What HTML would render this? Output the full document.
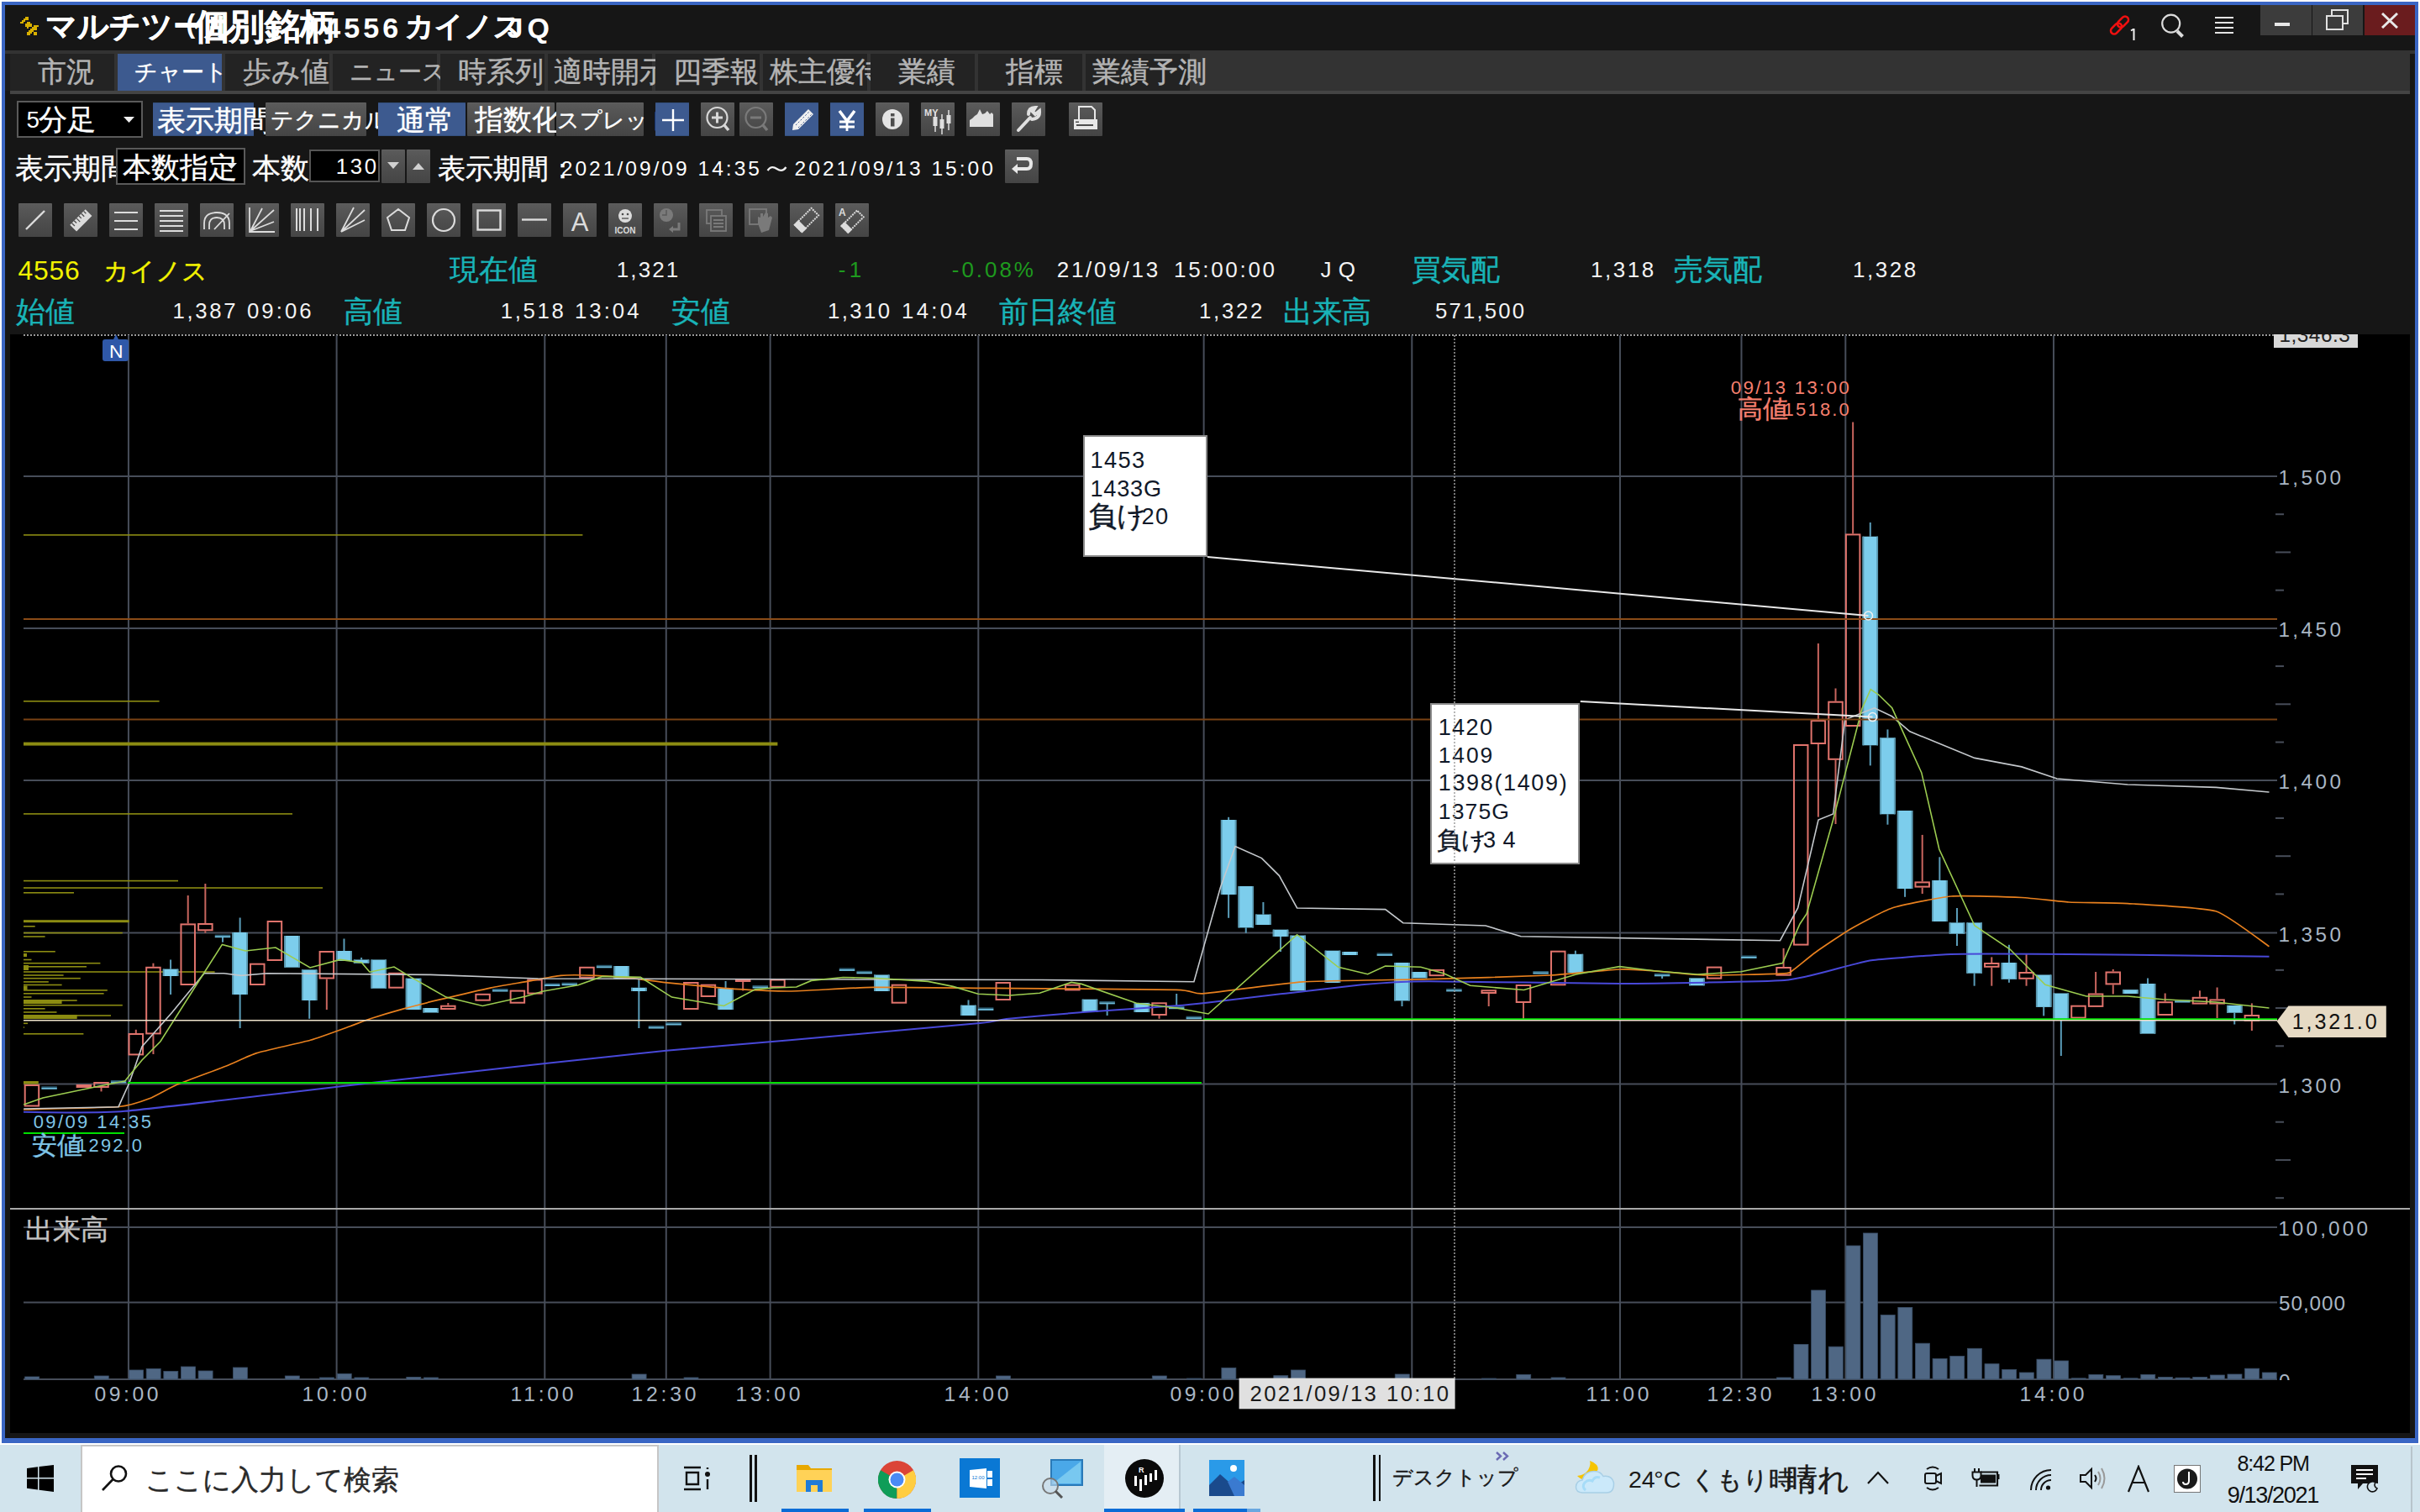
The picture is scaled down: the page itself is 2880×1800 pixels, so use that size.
<!DOCTYPE html>
<html><head><meta charset="utf-8"><style>
html,body{margin:0;padding:0;width:2880px;height:1800px;overflow:hidden;background:#fff}
body{position:relative;font-family:"Liberation Sans",sans-serif}
.t,.j,.r,.s{position:absolute}
.t,.j{white-space:nowrap}
.j{text-align:justify;text-align-last:justify;-webkit-text-stroke:0.4px currentColor}
</style></head><body>
<div class="r" style="left:0px;top:0px;width:2880px;height:1800px;background:#ffffff"></div>
<div class="r" style="left:2px;top:2px;width:2876px;height:1716px;background:#3a66c4"></div>
<div class="r" style="left:6px;top:6px;width:2868px;height:1706px;background:#161616"></div>
<svg class="s" style="left:24px;top:20px;" width="24" height="24" viewBox="0 0 24 24"><rect x="6" y="0" width="4" height="2" fill="#d8b000"/><rect x="4" y="2" width="6" height="2" fill="#d8b000"/><rect x="2" y="4" width="4" height="2" fill="#d8b000"/><rect x="0" y="6" width="4" height="2" fill="#d8b000"/><rect x="8" y="6" width="4" height="2" fill="#d8b000"/><rect x="6" y="8" width="8" height="4" fill="#d8b000"/><rect x="16" y="10" width="6" height="2" fill="#d8b000"/><rect x="8" y="12" width="2" height="2" fill="#d8b000"/><rect x="14" y="12" width="6" height="2" fill="#d8b000"/><rect x="12" y="14" width="8" height="2" fill="#d8b000"/><rect x="10" y="16" width="6" height="2" fill="#d8b000"/><rect x="8" y="18" width="6" height="2" fill="#d8b000"/><rect x="16" y="18" width="4" height="4" fill="#d8b000"/><rect x="8" y="20" width="4" height="2" fill="#d8b000"/></svg>
<div class="j" style="left:54.27px;top:12.73px;width:171.16px;font-size:37.31px;line-height:37.31px;color:#fff;font-weight:bold">マルチツール</div>
<div class="t" style="left:221.41px;top:12.2px;font-size:32px;line-height:32px;color:#fff;font-weight:bold">(</div>
<div class="j" style="left:230.84px;top:10.58px;width:137.82px;font-size:41.6px;line-height:41.6px;color:#fff;font-weight:bold">個別銘柄</div>
<div class="t" style="left:364.97px;top:12.2px;font-size:32px;line-height:32px;color:#fff;font-weight:bold">)</div>
<div class="t" style="left:386.29px;top:15.7px;font-size:34px;line-height:34px;color:#fff;letter-spacing:4.1px;font-weight:bold">4556</div>
<div class="j" style="left:481.57px;top:14.25px;width:104.86px;font-size:34.3px;line-height:34.3px;color:#fff;font-weight:bold">カイノス</div>
<div class="t" style="left:603.49px;top:15.7px;font-size:34px;line-height:34px;color:#fff;font-weight:bold">J</div>
<div class="t" style="left:627.61px;top:15.7px;font-size:34px;line-height:34px;color:#fff;font-weight:bold">Q</div>
<svg class="s" style="left:2510px;top:17px;" width="26" height="26" viewBox="0 0 26 26"><g fill="none" stroke="#f01010" stroke-width="2.6"><rect x="12.5" y="1.5" width="8" height="15" rx="4" transform="rotate(45 16.5 9)"/><rect x="4.5" y="9.5" width="8" height="15" rx="4" transform="rotate(45 8.5 17)"/></g></svg>
<svg class="s" style="left:2535px;top:34px;" width="7" height="14" viewBox="0 0 7 14"><path d="M1 2.5 L4.5 0.5 V14" fill="none" stroke="#f0f0f0" stroke-width="2"/></svg>
<svg class="s" style="left:2572px;top:16px;" width="28" height="29" viewBox="0 0 28 29"><g fill="none" stroke="#dcdcdc"><circle cx="11.7" cy="12.1" r="10.5" stroke-width="2.2"/><path d="M19 21 L25.5 27.5" stroke-width="4"/></g></svg>
<div class="r" style="left:2636px;top:20px;width:22px;height:2px;background:#e4e4e4"></div>
<div class="r" style="left:2636px;top:26px;width:22px;height:2px;background:#e4e4e4"></div>
<div class="r" style="left:2636px;top:32px;width:22px;height:2px;background:#e4e4e4"></div>
<div class="r" style="left:2636px;top:38px;width:22px;height:2px;background:#e4e4e4"></div>
<div class="r" style="left:2690px;top:6px;width:60.5px;height:35.5px;background:#3c3c3c"></div>
<div class="r" style="left:2707px;top:26.5px;width:18px;height:4px;background:#e8e8e8"></div>
<div class="r" style="left:2752px;top:6px;width:60px;height:35.5px;background:#3c3c3c"></div>
<svg class="s" style="left:2768px;top:11px;" width="28" height="26" viewBox="0 0 28 26"><g fill="none" stroke="#e0e0e0" stroke-width="2"><rect x="7" y="1" width="19" height="16"/><rect x="1" y="8" width="19" height="16" fill="#3c3c3c"/></g></svg>
<div class="r" style="left:2814px;top:6px;width:60px;height:35.5px;background:#6a1c1e"></div>
<svg class="s" style="left:2834px;top:15px;" width="20" height="19" viewBox="0 0 20 19"><g stroke="#e8e8e8" stroke-width="3"><path d="M1 1 L19 18 M19 1 L1 18"/></g></svg>
<div class="r" style="left:6px;top:60px;width:2868px;height:4px;background:#333333"></div>
<div class="r" style="left:6px;top:64px;width:6px;height:44px;background:#1c1c1c"></div>
<div class="r" style="left:12px;top:64px;width:2856px;height:44px;background:#333333"></div>
<div class="r" style="left:12px;top:108px;width:2856px;height:4px;background:#444444"></div>
<div class="r" style="left:12px;top:64px;width:124px;height:44px;background:#232323"></div>
<div class="j" style="left:44.62px;top:69px;width:58.76px;font-size:33.8px;line-height:33.8px;color:#b4b4b4">市況</div>
<div class="r" style="left:140px;top:64px;width:124px;height:44px;background:#3d5a8f"></div>
<div class="j" style="left:160.27px;top:72.27px;width:83.46px;font-size:27.3px;line-height:27.3px;color:#ffffff">チャート</div>
<div class="r" style="left:268px;top:64px;width:124px;height:44px;background:#232323"></div>
<div class="j" style="left:289.12px;top:69px;width:81.76px;font-size:33.8px;line-height:33.8px;color:#b4b4b4">歩み値</div>
<div class="r" style="left:396px;top:64px;width:124px;height:44px;background:#232323"></div>
<div class="j" style="left:415.74px;top:72.09px;width:84.53px;font-size:27.65px;line-height:27.65px;color:#b4b4b4">ニュース</div>
<div class="r" style="left:524px;top:64px;width:124px;height:44px;background:#232323"></div>
<div class="j" style="left:545.12px;top:69px;width:81.76px;font-size:33.8px;line-height:33.8px;color:#b4b4b4">時系列</div>
<div class="r" style="left:652px;top:64px;width:124px;height:44px;background:#232323"></div>
<div class="j" style="left:658.62px;top:69px;width:110.76px;font-size:33.8px;line-height:33.8px;color:#b4b4b4">適時開示</div>
<div class="r" style="left:780px;top:64px;width:124px;height:44px;background:#232323"></div>
<div class="j" style="left:800.62px;top:69px;width:82.76px;font-size:33.8px;line-height:33.8px;color:#b4b4b4">四季報</div>
<div class="r" style="left:908px;top:64px;width:124px;height:44px;background:#232323"></div>
<div class="j" style="left:915.62px;top:69px;width:108.76px;font-size:33.8px;line-height:33.8px;color:#b4b4b4">株主優待</div>
<div class="r" style="left:1036px;top:64px;width:124px;height:44px;background:#232323"></div>
<div class="j" style="left:1069.12px;top:69px;width:57.76px;font-size:33.8px;line-height:33.8px;color:#b4b4b4">業績</div>
<div class="r" style="left:1164px;top:64px;width:124px;height:44px;background:#232323"></div>
<div class="j" style="left:1197.12px;top:69px;width:57.76px;font-size:33.8px;line-height:33.8px;color:#b4b4b4">指標</div>
<div class="r" style="left:1292px;top:64px;width:124px;height:44px;background:#232323"></div>
<div class="j" style="left:1300.12px;top:69px;width:107.76px;font-size:33.8px;line-height:33.8px;color:#b4b4b4">業績予測</div>
<div class="r" style="left:20px;top:120px;width:150px;height:44px;background:#5a5a5a"></div>
<div class="r" style="left:22px;top:122px;width:146px;height:40px;background:#000000"></div>
<div class="t" style="left:31.58px;top:129.32px;font-size:27.86px;line-height:27.86px;color:#fff">5</div>
<div class="j" style="left:45.62px;top:126px;width:56.96px;font-size:33.8px;line-height:33.8px;color:#fff">分足</div>
<svg class="s" style="left:147px;top:139px;" width="13" height="7" viewBox="0 0 13 7"><path d="M0 0 L13 0 L6.5 7 Z" fill="#f0f0f0"/></svg>
<div class="r" style="left:182px;top:122px;width:120px;height:40px;background:#3d5a8f;border-radius:1px;box-shadow:inset 0 1px 0 #34507e, inset 0 -1px 0 #34507e"></div>
<div class="j" style="left:187.02px;top:127px;width:107.86px;font-size:33.8px;line-height:33.8px;color:#fff">表示期間</div>
<div class="r" style="left:316px;top:122px;width:120px;height:40px;background:#4d4d4d;background:linear-gradient(#646464 0, #5a5a5a 1.5px, #4f4f4f 50%, #454545 100%);border-radius:1px"></div>
<div class="j" style="left:322.27px;top:129.25px;width:104.47px;font-size:27.33px;line-height:27.33px;color:#fff">テクニカル</div>
<div class="r" style="left:450px;top:122px;width:104px;height:40px;background:#3d5a8f;border-radius:1px;box-shadow:inset 0 1px 0 #34507e, inset 0 -1px 0 #34507e"></div>
<div class="j" style="left:472.32px;top:127px;width:58.36px;font-size:33.8px;line-height:33.8px;color:#fff">通常</div>
<div class="r" style="left:556px;top:122px;width:104px;height:40px;background:#4d4d4d;background:linear-gradient(#646464 0, #5a5a5a 1.5px, #4f4f4f 50%, #454545 100%);border-radius:1px"></div>
<div class="j" style="left:564.62px;top:126px;width:85.06px;font-size:33.8px;line-height:33.8px;color:#fff">指数化</div>
<div class="r" style="left:662px;top:122px;width:104px;height:40px;background:#4d4d4d;background:linear-gradient(#646464 0, #5a5a5a 1.5px, #4f4f4f 50%, #454545 100%);border-radius:1px"></div>
<div class="j" style="left:663.4px;top:129.91px;width:99.51px;font-size:26.03px;line-height:26.03px;color:#fff">スプレッド</div>
<div class="r" style="left:780px;top:122px;width:40px;height:40px;background:#3d5a8f;border-radius:1px;box-shadow:inset 0 1px 0 #34507e, inset 0 -1px 0 #34507e"></div><svg class="s" style="left:780px;top:122px;" width="40" height="40" viewBox="0 0 40 40"><path d="M8 21 H34 M21 8 V34" stroke="#fff" stroke-width="2.4"/></svg>
<div class="r" style="left:834px;top:122px;width:40px;height:40px;background:#4d4d4d;background:linear-gradient(#646464 0, #5a5a5a 1.5px, #4f4f4f 50%, #454545 100%);border-radius:1px"></div><svg class="s" style="left:834px;top:122px;" width="40" height="40" viewBox="0 0 40 40"><g fill="none" stroke="#d8d8d8" stroke-width="2.2"><circle cx="19.5" cy="18" r="12"/><path d="M28 27 L33 33" stroke-width="3.5"/><path d="M13 18 H26 M19.5 11.5 V24.5" stroke-width="3"/></g></svg>
<div class="r" style="left:880px;top:122px;width:40px;height:40px;background:#4d4d4d;background:linear-gradient(#646464 0, #5a5a5a 1.5px, #4f4f4f 50%, #454545 100%);border-radius:1px"></div><svg class="s" style="left:880px;top:122px;" width="40" height="40" viewBox="0 0 40 40"><g fill="none" stroke="#7a7a7a" stroke-width="2.2"><circle cx="19.5" cy="18" r="12"/><path d="M28 27 L33 33" stroke-width="3.5"/><path d="M13 18 H26" stroke-width="3"/></g></svg>
<div class="r" style="left:934px;top:122px;width:40px;height:40px;background:#3d5a8f;border-radius:1px;box-shadow:inset 0 1px 0 #34507e, inset 0 -1px 0 #34507e"></div><svg class="s" style="left:934px;top:122px;" width="40" height="40" viewBox="0 0 40 40"><g fill="#f0f0f0"><path d="M9 33 L10 26 L28 8 L34 14 L16 32 Z"/></g><path d="M13 27 L29 11 M16 30 L32 14" stroke="#3d5a8f" stroke-width="1" stroke-dasharray="2 2"/></svg>
<div class="r" style="left:988px;top:122px;width:40px;height:40px;background:#3d5a8f;border-radius:1px;box-shadow:inset 0 1px 0 #34507e, inset 0 -1px 0 #34507e"></div><svg class="s" style="left:988px;top:122px;" width="40" height="40" viewBox="0 0 40 40"><g stroke="#fff" stroke-width="3.6" fill="none"><path d="M11 10 L20 22 L29 10"/><path d="M20 21 V34 M11 23 H29 M11 29 H29" stroke-width="2.8"/></g></svg>
<div class="r" style="left:1042px;top:122px;width:40px;height:40px;background:#4d4d4d;background:linear-gradient(#646464 0, #5a5a5a 1.5px, #4f4f4f 50%, #454545 100%);border-radius:1px"></div><svg class="s" style="left:1042px;top:122px;" width="40" height="40" viewBox="0 0 40 40"><circle cx="20" cy="20" r="12" fill="#e4e4e4"/><rect x="18" y="13" width="4.5" height="3.5" fill="#4d4d4d"/><rect x="18" y="18.5" width="4.5" height="10" fill="#4d4d4d"/></svg>
<div class="r" style="left:1096px;top:122px;width:40px;height:40px;background:#4d4d4d;background:linear-gradient(#646464 0, #5a5a5a 1.5px, #4f4f4f 50%, #454545 100%);border-radius:1px"></div><svg class="s" style="left:1096px;top:122px;" width="40" height="40" viewBox="0 0 40 40"><text x="4" y="16" font-family="Liberation Sans" font-weight="bold" font-size="11" fill="#e0e0e0">MY</text><g stroke="#e0e0e0" stroke-width="1.5"><path d="M17 11 V35 M25 14 V38 M33 9 V33"/></g><g fill="#e0e0e0"><rect x="14.5" y="17" width="5" height="11"/><rect x="22.5" y="20" width="5" height="11"/><rect x="30.5" y="15" width="5" height="10"/></g></svg>
<div class="r" style="left:1150px;top:122px;width:40px;height:40px;background:#4d4d4d;background:linear-gradient(#646464 0, #5a5a5a 1.5px, #4f4f4f 50%, #454545 100%);border-radius:1px"></div><svg class="s" style="left:1150px;top:122px;" width="40" height="40" viewBox="0 0 40 40"><path d="M4 29 V21 L7 19 L10 16 L13 14 L16 8 L19 14 L22 13 L25 10 L28 14 L30 12 L32 14 V29 Z" fill="#e0e0e0"/></svg>
<div class="r" style="left:1204px;top:122px;width:40px;height:40px;background:#4d4d4d;background:linear-gradient(#646464 0, #5a5a5a 1.5px, #4f4f4f 50%, #454545 100%);border-radius:1px"></div><svg class="s" style="left:1204px;top:122px;" width="40" height="40" viewBox="0 0 40 40"><g fill="none" stroke="#e0e0e0" stroke-width="4" stroke-linecap="round"><path d="M8 33 L22 18"/><path d="M20 14 Q20 6 28 6 L25 11 L28 14 L33 10 Q34 19 24 20"/></g></svg>
<div class="r" style="left:1272px;top:122px;width:40px;height:40px;background:#4d4d4d;background:linear-gradient(#646464 0, #5a5a5a 1.5px, #4f4f4f 50%, #454545 100%);border-radius:1px"></div><svg class="s" style="left:1272px;top:122px;" width="40" height="40" viewBox="0 0 40 40"><g fill="none" stroke="#e8e8e8" stroke-width="2"><path d="M12 21 V5 H27 L31 9 V21"/></g><rect x="6" y="20" width="28" height="12" fill="#e8e8e8"/><rect x="9" y="26" width="20" height="2" fill="#4d4d4d"/><rect x="8" y="22.5" width="4" height="1.5" fill="#4d4d4d"/></svg>
<div class="j" style="left:18.42px;top:183.5px;width:109.96px;font-size:33.8px;line-height:33.8px;color:#fff">表示期間</div>
<div class="r" style="left:138px;top:176px;width:154px;height:44px;background:#5a5a5a"></div>
<div class="r" style="left:140px;top:178px;width:150px;height:40px;background:#000000"></div>
<div class="j" style="left:146.32px;top:182.5px;width:110.96px;font-size:33.8px;line-height:33.8px;color:#fff">本数指定</div>
<svg class="s" style="left:268.7px;top:194px;" width="13" height="7" viewBox="0 0 13 7"><path d="M0 0 L13 0 L6.5 7 Z" fill="#f0f0f0"/></svg>
<div class="j" style="left:300.12px;top:183.5px;width:59.26px;font-size:33.8px;line-height:33.8px;color:#fff">本数</div>
<div class="r" style="left:368px;top:178px;width:84px;height:39px;background:#555555"></div>
<div class="r" style="left:370px;top:180px;width:80px;height:35px;background:#000000"></div>
<div class="t" style="left:399.64px;top:186.14px;font-size:25.71px;line-height:25.71px;color:#fff;letter-spacing:2.83px">130</div>
<div class="r" style="left:454px;top:178px;width:28px;height:40px;background:#4d4d4d;background:linear-gradient(#646464 0, #5a5a5a 1.5px, #4f4f4f 50%, #454545 100%);border-radius:1px"></div><svg class="s" style="left:454px;top:178px;" width="28" height="40" viewBox="0 0 28 40"><path d="M7 15 L21 15 L14 23 Z" fill="#d0d0d0"/></svg>
<div class="r" style="left:484px;top:178px;width:28px;height:40px;background:#4d4d4d;background:linear-gradient(#646464 0, #5a5a5a 1.5px, #4f4f4f 50%, #454545 100%);border-radius:1px"></div><svg class="s" style="left:484px;top:178px;" width="28" height="40" viewBox="0 0 28 40"><path d="M7 24 L21 24 L14 16 Z" fill="#d0d0d0"/></svg>
<div class="j" style="left:520.99px;top:183.84px;width:126.63px;font-size:33.13px;line-height:33.13px;color:#fff">表示期間：</div>
<div class="t" style="left:667.76px;top:188.81px;font-size:24.57px;line-height:24.57px;color:#fff;letter-spacing:3px">2021/09/09 14:35</div>
<svg class="s" style="left:912px;top:195px;" width="25" height="12" viewBox="0 0 25 12"><path d="M1.5 8 Q6 1.5 12.5 6 Q19 10.5 23.5 4" fill="none" stroke="#f0f0f0" stroke-width="2.2"/></svg>
<div class="t" style="left:945.56px;top:188.81px;font-size:24.57px;line-height:24.57px;color:#fff;letter-spacing:3.01px">2021/09/13 15:00</div>
<div class="r" style="left:1196px;top:178px;width:40px;height:40px;background:#4d4d4d;background:linear-gradient(#646464 0, #5a5a5a 1.5px, #4f4f4f 50%, #454545 100%);border-radius:1px"></div><svg class="s" style="left:1196px;top:178px;" width="40" height="40" viewBox="0 0 40 40"><g fill="none" stroke="#e8e8e8" stroke-width="4"><path d="M14 11 H26 Q31 11 31 17 Q31 23 26 23 H11"/></g><path d="M15 17 L8 23 L15 29 Z" fill="#e8e8e8"/></svg>
<div class="r" style="left:22px;top:242px;width:40px;height:40px;background:#4d4d4d;background:linear-gradient(#646464 0, #5a5a5a 1.5px, #4f4f4f 50%, #454545 100%);border-radius:1px"></div><svg class="s" style="left:22px;top:242px;" width="40" height="40" viewBox="0 0 40 40"><path d="M9 31 L31 9" stroke="#dcdcdc" stroke-width="2.4"/></svg>
<div class="r" style="left:76px;top:242px;width:40px;height:40px;background:#4d4d4d;background:linear-gradient(#646464 0, #5a5a5a 1.5px, #4f4f4f 50%, #454545 100%);border-radius:1px"></div><svg class="s" style="left:76px;top:242px;" width="40" height="40" viewBox="0 0 40 40"><g transform="rotate(-45 20 20)"><rect x="7" y="15" width="26" height="11" fill="#dcdcdc"/><path d="M10 15 V20 M14 15 V19 M18 15 V21 M22 15 V19 M26 15 V20 M30 15 V19" stroke="#4d4d4d" stroke-width="1.3"/></g></svg>
<div class="r" style="left:130px;top:242px;width:40px;height:40px;background:#4d4d4d;background:linear-gradient(#646464 0, #5a5a5a 1.5px, #4f4f4f 50%, #454545 100%);border-radius:1px"></div><svg class="s" style="left:130px;top:242px;" width="40" height="40" viewBox="0 0 40 40"><path d="M6 11 H34 M6 21 H34 M6 31 H34" stroke="#dcdcdc" stroke-width="2"/></svg>
<div class="r" style="left:184px;top:242px;width:40px;height:40px;background:#4d4d4d;background:linear-gradient(#646464 0, #5a5a5a 1.5px, #4f4f4f 50%, #454545 100%);border-radius:1px"></div><svg class="s" style="left:184px;top:242px;" width="40" height="40" viewBox="0 0 40 40"><path d="M6 9 H34 M6 15 H34 M6 21 H34 M6 27 H34 M6 33 H34" stroke="#dcdcdc" stroke-width="2"/></svg>
<div class="r" style="left:238px;top:242px;width:40px;height:40px;background:#4d4d4d;background:linear-gradient(#646464 0, #5a5a5a 1.5px, #4f4f4f 50%, #454545 100%);border-radius:1px"></div><svg class="s" style="left:238px;top:242px;" width="40" height="40" viewBox="0 0 40 40"><g fill="none" stroke="#dcdcdc" stroke-width="1.8"><path d="M5 31 V24 Q5 11 20 11 Q35 11 35 24 V31"/><path d="M11 31 V26 Q11 17 20 17 Q29 17 29 26 V31"/><path d="M17 31 L35 12"/></g></svg>
<div class="r" style="left:292px;top:242px;width:40px;height:40px;background:#4d4d4d;background:linear-gradient(#646464 0, #5a5a5a 1.5px, #4f4f4f 50%, #454545 100%);border-radius:1px"></div><svg class="s" style="left:292px;top:242px;" width="40" height="40" viewBox="0 0 40 40"><g fill="none" stroke="#dcdcdc" stroke-width="1.8"><path d="M5 5 V34 H35"/><path d="M6 33 L20 6 M6 33 L34 8 M6 33 L34 22"/></g></svg>
<div class="r" style="left:346px;top:242px;width:40px;height:40px;background:#4d4d4d;background:linear-gradient(#646464 0, #5a5a5a 1.5px, #4f4f4f 50%, #454545 100%);border-radius:1px"></div><svg class="s" style="left:346px;top:242px;" width="40" height="40" viewBox="0 0 40 40"><path d="M7 6 V33 M11 6 V33 M16 6 V33 M24 6 V33 M32 6 V33" stroke="#dcdcdc" stroke-width="2"/></svg>
<div class="r" style="left:400px;top:242px;width:40px;height:40px;background:#4d4d4d;background:linear-gradient(#646464 0, #5a5a5a 1.5px, #4f4f4f 50%, #454545 100%);border-radius:1px"></div><svg class="s" style="left:400px;top:242px;" width="40" height="40" viewBox="0 0 40 40"><g fill="none" stroke="#dcdcdc" stroke-width="1.8"><path d="M6 34 L21 5 M6 34 L34 8 M6 34 L34 20"/></g></svg>
<div class="r" style="left:454px;top:242px;width:40px;height:40px;background:#4d4d4d;background:linear-gradient(#646464 0, #5a5a5a 1.5px, #4f4f4f 50%, #454545 100%);border-radius:1px"></div><svg class="s" style="left:454px;top:242px;" width="40" height="40" viewBox="0 0 40 40"><path d="M20 7 L33 17 L28 32 H12 L7 17 Z" fill="none" stroke="#dcdcdc" stroke-width="2"/></svg>
<div class="r" style="left:508px;top:242px;width:40px;height:40px;background:#4d4d4d;background:linear-gradient(#646464 0, #5a5a5a 1.5px, #4f4f4f 50%, #454545 100%);border-radius:1px"></div><svg class="s" style="left:508px;top:242px;" width="40" height="40" viewBox="0 0 40 40"><circle cx="20" cy="20" r="13" fill="none" stroke="#dcdcdc" stroke-width="2.2"/></svg>
<div class="r" style="left:562px;top:242px;width:40px;height:40px;background:#4d4d4d;background:linear-gradient(#646464 0, #5a5a5a 1.5px, #4f4f4f 50%, #454545 100%);border-radius:1px"></div><svg class="s" style="left:562px;top:242px;" width="40" height="40" viewBox="0 0 40 40"><rect x="6.5" y="8.5" width="27" height="23" fill="none" stroke="#dcdcdc" stroke-width="2.4"/></svg>
<div class="r" style="left:616px;top:242px;width:40px;height:40px;background:#4d4d4d;background:linear-gradient(#646464 0, #5a5a5a 1.5px, #4f4f4f 50%, #454545 100%);border-radius:1px"></div><svg class="s" style="left:616px;top:242px;" width="40" height="40" viewBox="0 0 40 40"><path d="M5 19.5 H35" stroke="#dcdcdc" stroke-width="2.4"/></svg>
<div class="r" style="left:670px;top:242px;width:40px;height:40px;background:#4d4d4d;background:linear-gradient(#646464 0, #5a5a5a 1.5px, #4f4f4f 50%, #454545 100%);border-radius:1px"></div><svg class="s" style="left:670px;top:242px;" width="40" height="40" viewBox="0 0 40 40"><text x="20" y="33" text-anchor="middle" font-family="Liberation Sans" font-size="31" fill="#dcdcdc">A</text></svg>
<div class="r" style="left:724px;top:242px;width:40px;height:40px;background:#4d4d4d;background:linear-gradient(#646464 0, #5a5a5a 1.5px, #4f4f4f 50%, #454545 100%);border-radius:1px"></div><svg class="s" style="left:724px;top:242px;" width="40" height="40" viewBox="0 0 40 40"><circle cx="20" cy="15" r="8" fill="#dcdcdc"/><circle cx="17" cy="13" r="1.3" fill="#4d4d4d"/><circle cx="23" cy="13" r="1.3" fill="#4d4d4d"/><path d="M16 18 H24" stroke="#4d4d4d" stroke-width="1.3"/><text x="20" y="36" text-anchor="middle" font-family="Liberation Sans" font-weight="bold" font-size="10" fill="#dcdcdc">ICON</text></svg>
<div class="r" style="left:778px;top:242px;width:40px;height:40px;background:#4d4d4d;background:linear-gradient(#646464 0, #5a5a5a 1.5px, #4f4f4f 50%, #454545 100%);border-radius:1px"></div><svg class="s" style="left:778px;top:242px;" width="40" height="40" viewBox="0 0 40 40"><circle cx="15" cy="14" r="8" fill="#7a7a7a"/><path d="M15 8 V14 H10" fill="none" stroke="#5a5a5a" stroke-width="1.5"/><path d="M30 23 V31 H21" fill="none" stroke="#7a7a7a" stroke-width="3"/><path d="M23 27 L18 31 L23 35 Z" fill="#7a7a7a"/></svg>
<div class="r" style="left:832px;top:242px;width:40px;height:40px;background:#4d4d4d;background:linear-gradient(#646464 0, #5a5a5a 1.5px, #4f4f4f 50%, #454545 100%);border-radius:1px"></div><svg class="s" style="left:832px;top:242px;" width="40" height="40" viewBox="0 0 40 40"><g fill="none" stroke="#7a7a7a" stroke-width="1.8"><rect x="9" y="8" width="18" height="16"/><rect x="14" y="15" width="18" height="18" fill="#4d4d4d"/><path d="M17 20 H29 M17 24 H29 M17 28 H29"/></g></svg>
<div class="r" style="left:886px;top:242px;width:40px;height:40px;background:#4d4d4d;background:linear-gradient(#646464 0, #5a5a5a 1.5px, #4f4f4f 50%, #454545 100%);border-radius:1px"></div><svg class="s" style="left:886px;top:242px;" width="40" height="40" viewBox="0 0 40 40"><rect x="6" y="7" width="20" height="18" fill="none" stroke="#7a7a7a" stroke-width="1.8"/><path d="M20 35 L16 24 V16 L19 17 V12 L22 12 V16 L25 11 L28 12 V17 L31 15 L33 17 L29 32 Z" fill="#7a7a7a"/></svg>
<div class="r" style="left:940px;top:242px;width:40px;height:40px;background:#4d4d4d;background:linear-gradient(#646464 0, #5a5a5a 1.5px, #4f4f4f 50%, #454545 100%);border-radius:1px"></div><svg class="s" style="left:940px;top:242px;" width="40" height="40" viewBox="0 0 40 40"><g transform="rotate(-45 20 20)"><rect x="6" y="14" width="28" height="12" fill="none" stroke="#dcdcdc" stroke-width="2" stroke-dasharray="2 1"/><rect x="5" y="13" width="8" height="14" fill="#dcdcdc"/></g></svg>
<div class="r" style="left:994px;top:242px;width:40px;height:40px;background:#4d4d4d;background:linear-gradient(#646464 0, #5a5a5a 1.5px, #4f4f4f 50%, #454545 100%);border-radius:1px"></div><svg class="s" style="left:994px;top:242px;" width="40" height="40" viewBox="0 0 40 40"><text x="4" y="15" font-family="Liberation Sans" font-weight="bold" font-size="12" fill="#dcdcdc">A</text><g transform="rotate(-45 21 22)"><rect x="8" y="16" width="26" height="11" fill="none" stroke="#dcdcdc" stroke-width="2" stroke-dasharray="2 1"/><rect x="7" y="15" width="7" height="13" fill="#dcdcdc"/></g></svg>
<div class="t" style="left:21.57px;top:306.72px;font-size:31.86px;line-height:31.86px;color:#f2f200;letter-spacing:0.79px">4556</div>
<div class="j" style="left:123.36px;top:307.22px;width:92.88px;font-size:30.38px;line-height:30.38px;color:#f2f200">カイノス</div>
<div class="j" style="left:534.69px;top:303.34px;width:84.72px;font-size:35.1px;line-height:35.1px;color:#19b4b8">現在値</div>
<div class="t" style="left:733.72px;top:307.6px;font-size:26px;line-height:26px;color:#f4f4f4;letter-spacing:2.12px">1,321</div>
<div class="t" style="left:997.84px;top:307.6px;font-size:26px;line-height:26px;color:#1e9a1e;letter-spacing:4.31px">-1</div>
<div class="t" style="left:1132.84px;top:307.6px;font-size:26px;line-height:26px;color:#1e9a1e;letter-spacing:2.94px">-0.08%</div>
<div class="t" style="left:1257.69px;top:307.6px;font-size:26px;line-height:26px;color:#f4f4f4;letter-spacing:2.75px">21/09/13</div>
<div class="t" style="left:1397.02px;top:307.6px;font-size:26px;line-height:26px;color:#f4f4f4;letter-spacing:2.68px">15:00:00</div>
<div class="t" style="left:1571.59px;top:307.6px;font-size:26px;line-height:26px;color:#f4f4f4">J</div>
<div class="t" style="left:1592.77px;top:307.6px;font-size:26px;line-height:26px;color:#f4f4f4">Q</div>
<div class="j" style="left:1680.49px;top:303.34px;width:85.02px;font-size:35.1px;line-height:35.1px;color:#19b4b8">買気配</div>
<div class="t" style="left:1893.02px;top:307.6px;font-size:26px;line-height:26px;color:#f4f4f4;letter-spacing:2.51px">1,318</div>
<div class="j" style="left:1992.49px;top:303.34px;width:85.02px;font-size:35.1px;line-height:35.1px;color:#19b4b8">売気配</div>
<div class="t" style="left:2205.02px;top:307.6px;font-size:26px;line-height:26px;color:#f4f4f4;letter-spacing:2.51px">1,328</div>
<div class="j" style="left:18.79px;top:352.84px;width:58.32px;font-size:35.1px;line-height:35.1px;color:#19b4b8">始値</div>
<div class="t" style="left:205.44px;top:358.14px;font-size:25.71px;line-height:25.71px;color:#f4f4f4;letter-spacing:2.7px">1,387</div>
<div class="t" style="left:294px;top:358.14px;font-size:25.71px;line-height:25.71px;color:#f4f4f4;letter-spacing:3.05px">09:06</div>
<div class="j" style="left:409.49px;top:352.84px;width:58.02px;font-size:35.1px;line-height:35.1px;color:#19b4b8">高値</div>
<div class="t" style="left:595.74px;top:358.14px;font-size:25.71px;line-height:25.71px;color:#f4f4f4;letter-spacing:2.66px">1,518</div>
<div class="t" style="left:684.04px;top:358.14px;font-size:25.71px;line-height:25.71px;color:#f4f4f4;letter-spacing:3.02px">13:04</div>
<div class="j" style="left:799.09px;top:352.84px;width:58.32px;font-size:35.1px;line-height:35.1px;color:#19b4b8">安値</div>
<div class="t" style="left:985.04px;top:358.14px;font-size:25.71px;line-height:25.71px;color:#f4f4f4;letter-spacing:2.4px">1,310</div>
<div class="t" style="left:1073.04px;top:358.14px;font-size:25.71px;line-height:25.71px;color:#f4f4f4;letter-spacing:3.34px">14:04</div>
<div class="j" style="left:1189.49px;top:352.84px;width:110.02px;font-size:35.1px;line-height:35.1px;color:#19b4b8">前日終値</div>
<div class="t" style="left:1427.04px;top:358.14px;font-size:25.71px;line-height:25.71px;color:#f4f4f4;letter-spacing:2.73px">1,322</div>
<div class="j" style="left:1527.49px;top:352.84px;width:83.02px;font-size:35.1px;line-height:35.1px;color:#19b4b8">出来高</div>
<div class="t" style="left:1707.97px;top:358.14px;font-size:25.71px;line-height:25.71px;color:#f4f4f4;letter-spacing:2.18px">571,500</div>
<div class="r" style="left:12px;top:398px;width:2856px;height:1308px;background:#000000"></div>
<svg class="s" style="left:0;top:0" width="2880" height="1800" viewBox="0 0 2880 1800"><path d="M28 399 H2706" stroke="#9a9a9a" stroke-width="2" stroke-dasharray="2 2"/><path d="M28 567 H2710" stroke="#474d59" stroke-width="2"/><path d="M28 748 H2710" stroke="#474d59" stroke-width="2"/><path d="M28 929 H2710" stroke="#474d59" stroke-width="2"/><path d="M28 1110.5 H2710" stroke="#474d59" stroke-width="2"/><path d="M28 1290.5 H2710" stroke="#474d59" stroke-width="2"/><path d="M28 1461 H2710" stroke="#474d59" stroke-width="2"/><path d="M28 1550.5 H2710" stroke="#474d59" stroke-width="2"/><path d="M28 1642 H2710" stroke="#474d59" stroke-width="2"/><path d="M152.94 399 V1642" stroke="#474d59" stroke-width="2"/><path d="M400.62 399 V1642" stroke="#474d59" stroke-width="2"/><path d="M648.3 399 V1642" stroke="#474d59" stroke-width="2"/><path d="M792.78 399 V1642" stroke="#474d59" stroke-width="2"/><path d="M916.62 399 V1642" stroke="#474d59" stroke-width="2"/><path d="M1164.3 399 V1642" stroke="#474d59" stroke-width="2"/><path d="M1432.62 399 V1642" stroke="#474d59" stroke-width="2"/><path d="M1680.3 399 V1642" stroke="#474d59" stroke-width="2"/><path d="M1927.98 399 V1642" stroke="#474d59" stroke-width="2"/><path d="M2072.46 399 V1642" stroke="#474d59" stroke-width="2"/><path d="M2196.3 399 V1642" stroke="#474d59" stroke-width="2"/><path d="M2443.98 399 V1642" stroke="#474d59" stroke-width="2"/><path d="M12 1439 H2868" stroke="#a8a8a8" stroke-width="2"/><path d="M2708 612.22 H2718" stroke="#474d59" stroke-width="2"/><path d="M2708 657.44 H2726" stroke="#474d59" stroke-width="2"/><path d="M2708 702.66 H2718" stroke="#474d59" stroke-width="2"/><path d="M2708 793.09 H2718" stroke="#474d59" stroke-width="2"/><path d="M2708 838.31 H2726" stroke="#474d59" stroke-width="2"/><path d="M2708 883.53 H2718" stroke="#474d59" stroke-width="2"/><path d="M2708 973.97 H2718" stroke="#474d59" stroke-width="2"/><path d="M2708 1019.19 H2726" stroke="#474d59" stroke-width="2"/><path d="M2708 1064.41 H2718" stroke="#474d59" stroke-width="2"/><path d="M2708 1154.84 H2718" stroke="#474d59" stroke-width="2"/><path d="M2708 1200.06 H2726" stroke="#474d59" stroke-width="2"/><path d="M2708 1245.28 H2718" stroke="#474d59" stroke-width="2"/><path d="M2708 1335.72 H2718" stroke="#474d59" stroke-width="2"/><path d="M2708 1380.94 H2726" stroke="#474d59" stroke-width="2"/><path d="M2708 1426.16 H2718" stroke="#474d59" stroke-width="2"/><rect x="28" y="636.1" width="665.4" height="1.6" fill="#8c8c12"/><rect x="28" y="834" width="161.6" height="1.6" fill="#8c8c12"/><rect x="28" y="883.6" width="897.4" height="4" fill="#8c8c12"/><rect x="28" y="968.1" width="320" height="1.6" fill="#8c8c12"/><rect x="28" y="1047.8" width="184" height="1.6" fill="#8c8c12"/><rect x="28" y="1056.2" width="356" height="1.6" fill="#8c8c12"/><rect x="28" y="1062" width="60" height="1.6" fill="#8c8c12"/><rect x="28" y="1095.2" width="125.6" height="3" fill="#8c8c12"/><rect x="28" y="1102" width="13.7" height="1.6" fill="#8c8c12"/><rect x="28" y="1109.8" width="117.8" height="1.6" fill="#8c8c12"/><rect x="28" y="1114.2" width="25.6" height="1.6" fill="#8c8c12"/><rect x="28" y="1132" width="37.8" height="1.6" fill="#8c8c12"/><rect x="28" y="1135" width="4" height="4" fill="#8c8c12"/><rect x="28" y="1141.7" width="9.5" height="1.6" fill="#8c8c12"/><rect x="28" y="1145.9" width="91.4" height="1.6" fill="#8c8c12"/><rect x="28" y="1150" width="75" height="1.6" fill="#8c8c12"/><rect x="28" y="1149" width="6" height="6" fill="#8c8c12"/><rect x="28" y="1156.2" width="227.6" height="1.6" fill="#8c8c12"/><rect x="28" y="1160.2" width="47.6" height="1.6" fill="#8c8c12"/><rect x="28" y="1163.9" width="67.8" height="1.6" fill="#8c8c12"/><rect x="28" y="1168.1" width="29.8" height="1.6" fill="#8c8c12"/><rect x="28" y="1171.7" width="45.6" height="1.6" fill="#8c8c12"/><rect x="28" y="1173.5" width="4.5" height="5" fill="#8c8c12"/><rect x="28" y="1178.1" width="99.8" height="1.6" fill="#8c8c12"/><rect x="28" y="1182" width="95.6" height="1.6" fill="#8c8c12"/><rect x="28" y="1186.2" width="9.5" height="1.6" fill="#8c8c12"/><rect x="28" y="1190" width="45.6" height="5" fill="#8c8c12"/><rect x="28" y="1190.2" width="63.7" height="1.6" fill="#8c8c12"/><rect x="28" y="1195.9" width="117.8" height="1.6" fill="#8c8c12"/><rect x="28" y="1200" width="25.6" height="1.6" fill="#8c8c12"/><rect x="28" y="1204.2" width="39.5" height="1.6" fill="#8c8c12"/><rect x="28" y="1208" width="63.7" height="5" fill="#8c8c12"/><rect x="28" y="1208.2" width="104" height="1.6" fill="#8c8c12"/><rect x="28" y="1217.5" width="5" height="1.6" fill="#8c8c12"/><rect x="28" y="1222.2" width="1" height="1.6" fill="#8c8c12"/><rect x="28" y="1230" width="71.4" height="1.6" fill="#8c8c12"/><rect x="28" y="1287.05" width="17.8" height="3.5" fill="#8c8c12"/><rect x="29.7" y="1639" width="17" height="3" fill="#4f6784" stroke="#3a4e66" stroke-width="0.8"/><rect x="112.26" y="1638" width="17" height="4" fill="#4f6784" stroke="#3a4e66" stroke-width="0.8"/><rect x="153.54" y="1631" width="17" height="11" fill="#4f6784" stroke="#3a4e66" stroke-width="0.8"/><rect x="174.18" y="1629.5" width="17" height="12.5" fill="#4f6784" stroke="#3a4e66" stroke-width="0.8"/><rect x="194.82" y="1632.5" width="17" height="9.5" fill="#4f6784" stroke="#3a4e66" stroke-width="0.8"/><rect x="215.46" y="1627" width="17" height="15" fill="#4f6784" stroke="#3a4e66" stroke-width="0.8"/><rect x="236.1" y="1632" width="17" height="10" fill="#4f6784" stroke="#3a4e66" stroke-width="0.8"/><rect x="277.38" y="1628" width="17" height="14" fill="#4f6784" stroke="#3a4e66" stroke-width="0.8"/><rect x="339.3" y="1638" width="17" height="4" fill="#4f6784" stroke="#3a4e66" stroke-width="0.8"/><rect x="380.58" y="1640" width="17" height="2" fill="#4f6784" stroke="#3a4e66" stroke-width="0.8"/><rect x="401.22" y="1635.5" width="17" height="6.5" fill="#4f6784" stroke="#3a4e66" stroke-width="0.8"/><rect x="421.86" y="1640" width="17" height="2" fill="#4f6784" stroke="#3a4e66" stroke-width="0.8"/><rect x="483.78" y="1639.5" width="17" height="2.5" fill="#4f6784" stroke="#3a4e66" stroke-width="0.8"/><rect x="504.42" y="1640" width="17" height="2" fill="#4f6784" stroke="#3a4e66" stroke-width="0.8"/><rect x="752.1" y="1636" width="17" height="6" fill="#4f6784" stroke="#3a4e66" stroke-width="0.8"/><rect x="814.02" y="1640" width="17" height="2" fill="#4f6784" stroke="#3a4e66" stroke-width="0.8"/><rect x="1185.54" y="1638" width="17" height="4" fill="#4f6784" stroke="#3a4e66" stroke-width="0.8"/><rect x="1371.3" y="1638" width="17" height="4" fill="#4f6784" stroke="#3a4e66" stroke-width="0.8"/><rect x="1412.58" y="1641" width="17" height="1" fill="#4f6784" stroke="#3a4e66" stroke-width="0.8"/><rect x="1453.86" y="1628.5" width="17" height="13.5" fill="#4f6784" stroke="#3a4e66" stroke-width="0.8"/><rect x="1515.78" y="1637.7" width="17" height="4.3" fill="#4f6784" stroke="#3a4e66" stroke-width="0.8"/><rect x="1536.42" y="1631" width="17" height="11" fill="#4f6784" stroke="#3a4e66" stroke-width="0.8"/><rect x="1660.26" y="1636" width="17" height="6" fill="#4f6784" stroke="#3a4e66" stroke-width="0.8"/><rect x="1763.46" y="1641" width="17" height="1" fill="#4f6784" stroke="#3a4e66" stroke-width="0.8"/><rect x="1804.74" y="1636.5" width="17" height="5.5" fill="#4f6784" stroke="#3a4e66" stroke-width="0.8"/><rect x="1846.02" y="1640" width="17" height="2" fill="#4f6784" stroke="#3a4e66" stroke-width="0.8"/><rect x="2114.34" y="1640" width="17" height="2" fill="#4f6784" stroke="#3a4e66" stroke-width="0.8"/><rect x="2134.98" y="1600.4" width="17" height="41.6" fill="#4f6784" stroke="#3a4e66" stroke-width="0.8"/><rect x="2155.62" y="1536" width="17" height="106" fill="#4f6784" stroke="#3a4e66" stroke-width="0.8"/><rect x="2176.26" y="1603.2" width="17" height="38.8" fill="#4f6784" stroke="#3a4e66" stroke-width="0.8"/><rect x="2196.9" y="1483" width="17" height="159" fill="#4f6784" stroke="#3a4e66" stroke-width="0.8"/><rect x="2217.54" y="1468" width="17" height="174" fill="#4f6784" stroke="#3a4e66" stroke-width="0.8"/><rect x="2238.18" y="1565.5" width="17" height="76.5" fill="#4f6784" stroke="#3a4e66" stroke-width="0.8"/><rect x="2258.82" y="1556.4" width="17" height="85.6" fill="#4f6784" stroke="#3a4e66" stroke-width="0.8"/><rect x="2279.46" y="1599.2" width="17" height="42.8" fill="#4f6784" stroke="#3a4e66" stroke-width="0.8"/><rect x="2300.1" y="1617.6" width="17" height="24.4" fill="#4f6784" stroke="#3a4e66" stroke-width="0.8"/><rect x="2320.74" y="1614.5" width="17" height="27.5" fill="#4f6784" stroke="#3a4e66" stroke-width="0.8"/><rect x="2341.38" y="1605.3" width="17" height="36.7" fill="#4f6784" stroke="#3a4e66" stroke-width="0.8"/><rect x="2362.02" y="1623.7" width="17" height="18.3" fill="#4f6784" stroke="#3a4e66" stroke-width="0.8"/><rect x="2382.66" y="1630.4" width="17" height="11.6" fill="#4f6784" stroke="#3a4e66" stroke-width="0.8"/><rect x="2403.3" y="1634" width="17" height="8" fill="#4f6784" stroke="#3a4e66" stroke-width="0.8"/><rect x="2423.94" y="1618.2" width="17" height="23.8" fill="#4f6784" stroke="#3a4e66" stroke-width="0.8"/><rect x="2444.58" y="1620" width="17" height="22" fill="#4f6784" stroke="#3a4e66" stroke-width="0.8"/><rect x="2465.22" y="1640.8" width="17" height="1.2" fill="#4f6784" stroke="#3a4e66" stroke-width="0.8"/><rect x="2485.86" y="1636.5" width="17" height="5.5" fill="#4f6784" stroke="#3a4e66" stroke-width="0.8"/><rect x="2506.5" y="1637.7" width="17" height="4.3" fill="#4f6784" stroke="#3a4e66" stroke-width="0.8"/><rect x="2527.14" y="1640.8" width="17" height="1.2" fill="#4f6784" stroke="#3a4e66" stroke-width="0.8"/><rect x="2547.78" y="1636.5" width="17" height="5.5" fill="#4f6784" stroke="#3a4e66" stroke-width="0.8"/><rect x="2568.42" y="1639.6" width="17" height="2.4" fill="#4f6784" stroke="#3a4e66" stroke-width="0.8"/><rect x="2589.06" y="1640.2" width="17" height="1.8" fill="#4f6784" stroke="#3a4e66" stroke-width="0.8"/><rect x="2609.7" y="1639.6" width="17" height="2.4" fill="#4f6784" stroke="#3a4e66" stroke-width="0.8"/><rect x="2630.34" y="1637" width="17" height="5" fill="#4f6784" stroke="#3a4e66" stroke-width="0.8"/><rect x="2650.98" y="1636" width="17" height="6" fill="#4f6784" stroke="#3a4e66" stroke-width="0.8"/><rect x="2671.62" y="1629.2" width="17" height="12.8" fill="#4f6784" stroke="#3a4e66" stroke-width="0.8"/><rect x="2692.26" y="1634" width="17" height="8" fill="#4f6784" stroke="#3a4e66" stroke-width="0.8"/><rect x="29.7" y="1292" width="16.5" height="24.5" fill="none" stroke="#e0736c" stroke-width="2"/><rect x="49.34" y="1293.3" width="18.5" height="1.5" fill="#2a5a70"/><rect x="49.34" y="1294.8" width="18.5" height="2" fill="#6ab8d8"/><rect x="91.62" y="1292" width="16.5" height="2" fill="none" stroke="#e0736c" stroke-width="2"/><path d="M120.51 1295 V1299.4" stroke="#c8655e" stroke-width="2"/><rect x="112.26" y="1289" width="16.5" height="5" fill="none" stroke="#e0736c" stroke-width="2"/><rect x="131.9" y="1286" width="18.5" height="1.5" fill="#2a5a70"/><rect x="131.9" y="1287.5" width="18.5" height="2" fill="#6ab8d8"/><path d="M161.79 1225.8 V1230" stroke="#c8655e" stroke-width="2"/><rect x="153.54" y="1231" width="16.5" height="24.4" fill="none" stroke="#e0736c" stroke-width="2"/><path d="M182.43 1146.7 V1150.8" stroke="#c8655e" stroke-width="2"/><path d="M182.43 1231.4 V1255" stroke="#c8655e" stroke-width="2"/><rect x="174.18" y="1151.8" width="16.5" height="78.6" fill="none" stroke="#e0736c" stroke-width="2"/><path d="M203.07 1142.5 V1153.6" stroke="#5a9cb8" stroke-width="2"/><path d="M203.07 1162 V1184" stroke="#5a9cb8" stroke-width="2"/><rect x="193.82" y="1153.6" width="18.5" height="8.4" fill="#7ccdec"/><rect x="193.82" y="1153.6" width="1.8" height="8.4" fill="#5a9ab2"/><rect x="210.52" y="1153.6" width="1.8" height="8.4" fill="#5a9ab2"/><path d="M223.71 1066 V1099.4" stroke="#c8655e" stroke-width="2"/><rect x="215.46" y="1100.4" width="16.5" height="71.6" fill="none" stroke="#e0736c" stroke-width="2"/><path d="M244.35 1052 V1099" stroke="#c8655e" stroke-width="2"/><path d="M244.35 1108.3 V1110.6" stroke="#c8655e" stroke-width="2"/><rect x="236.1" y="1100" width="16.5" height="7.3" fill="none" stroke="#e0736c" stroke-width="2"/><path d="M264.99 1114.7 V1121.7" stroke="#5a9cb8" stroke-width="2"/><rect x="255.74" y="1112.7" width="18.5" height="1.5" fill="#2a5a70"/><rect x="255.74" y="1114.2" width="18.5" height="2" fill="#6ab8d8"/><path d="M285.63 1092.5 V1110" stroke="#5a9cb8" stroke-width="2"/><path d="M285.63 1184 V1224" stroke="#5a9cb8" stroke-width="2"/><rect x="276.38" y="1110" width="18.5" height="74" fill="#7ccdec"/><rect x="276.38" y="1110" width="1.8" height="74" fill="#5a9ab2"/><rect x="293.08" y="1110" width="1.8" height="74" fill="#5a9ab2"/><rect x="298.02" y="1147.7" width="16.5" height="24.3" fill="none" stroke="#e0736c" stroke-width="2"/><rect x="318.66" y="1097" width="16.5" height="46" fill="none" stroke="#e0736c" stroke-width="2"/><rect x="338.3" y="1114" width="18.5" height="37.7" fill="#7ccdec"/><rect x="338.3" y="1114" width="1.8" height="37.7" fill="#5a9ab2"/><rect x="355" y="1114" width="1.8" height="37.7" fill="#5a9ab2"/><path d="M368.19 1191 V1212.8" stroke="#5a9cb8" stroke-width="2"/><rect x="358.94" y="1154.4" width="18.5" height="36.6" fill="#7ccdec"/><rect x="358.94" y="1154.4" width="1.8" height="36.6" fill="#5a9ab2"/><rect x="375.64" y="1154.4" width="1.8" height="36.6" fill="#5a9ab2"/><path d="M388.83 1165.5 V1202" stroke="#c8655e" stroke-width="2"/><rect x="380.58" y="1133" width="16.5" height="31.5" fill="none" stroke="#e0736c" stroke-width="2"/><path d="M409.47 1117.5 V1132" stroke="#5a9cb8" stroke-width="2"/><rect x="400.22" y="1132" width="18.5" height="12" fill="#7ccdec"/><rect x="400.22" y="1132" width="1.8" height="12" fill="#5a9ab2"/><rect x="416.92" y="1132" width="1.8" height="12" fill="#5a9ab2"/><path d="M430.11 1140 V1142.5" stroke="#5a9cb8" stroke-width="2"/><rect x="420.86" y="1142.5" width="18.5" height="4.2" fill="#7ccdec"/><rect x="420.86" y="1142.5" width="1.8" height="4.2" fill="#5a9ab2"/><rect x="437.56" y="1142.5" width="1.8" height="4.2" fill="#5a9ab2"/><rect x="441.5" y="1142.5" width="18.5" height="34.2" fill="#7ccdec"/><rect x="441.5" y="1142.5" width="1.8" height="34.2" fill="#5a9ab2"/><rect x="458.2" y="1142.5" width="1.8" height="34.2" fill="#5a9ab2"/><rect x="463.14" y="1158.8" width="16.5" height="16.9" fill="none" stroke="#e0736c" stroke-width="2"/><rect x="482.78" y="1164.7" width="18.5" height="37.3" fill="#7ccdec"/><rect x="482.78" y="1164.7" width="1.8" height="37.3" fill="#5a9ab2"/><rect x="499.48" y="1164.7" width="1.8" height="37.3" fill="#5a9ab2"/><rect x="503.42" y="1200" width="18.5" height="5.5" fill="#7ccdec"/><rect x="503.42" y="1200" width="1.8" height="5.5" fill="#5a9ab2"/><rect x="520.12" y="1200" width="1.8" height="5.5" fill="#5a9ab2"/><path d="M533.31 1194 V1196.7" stroke="#c8655e" stroke-width="2"/><rect x="525.06" y="1197.7" width="16.5" height="3.3" fill="none" stroke="#e0736c" stroke-width="2"/><rect x="566.34" y="1183.8" width="16.5" height="6.9" fill="none" stroke="#e0736c" stroke-width="2"/><rect x="585.98" y="1177" width="18.5" height="1.5" fill="#2a5a70"/><rect x="585.98" y="1178.5" width="18.5" height="2" fill="#6ab8d8"/><rect x="607.62" y="1179.6" width="16.5" height="14.1" fill="none" stroke="#e0736c" stroke-width="2"/><rect x="628.26" y="1166.5" width="16.5" height="16.1" fill="none" stroke="#e0736c" stroke-width="2"/><rect x="647.9" y="1170.5" width="18.5" height="1.5" fill="#2a5a70"/><rect x="647.9" y="1172" width="18.5" height="2" fill="#6ab8d8"/><rect x="668.54" y="1169.7" width="18.5" height="1.5" fill="#2a5a70"/><rect x="668.54" y="1171.2" width="18.5" height="2" fill="#6ab8d8"/><rect x="690.18" y="1151.8" width="16.5" height="11.9" fill="none" stroke="#e0736c" stroke-width="2"/><rect x="709.82" y="1148.8" width="18.5" height="1.5" fill="#2a5a70"/><rect x="709.82" y="1150.3" width="18.5" height="2" fill="#6ab8d8"/><rect x="730.46" y="1150" width="18.5" height="16" fill="#7ccdec"/><rect x="730.46" y="1150" width="1.8" height="16" fill="#5a9ab2"/><rect x="747.16" y="1150" width="1.8" height="16" fill="#5a9ab2"/><path d="M760.35 1166 V1175.8" stroke="#5a9cb8" stroke-width="2"/><path d="M760.35 1180 V1224" stroke="#5a9cb8" stroke-width="2"/><rect x="751.1" y="1175.8" width="18.5" height="4.2" fill="#7ccdec"/><rect x="751.1" y="1175.8" width="1.8" height="4.2" fill="#5a9ab2"/><rect x="767.8" y="1175.8" width="1.8" height="4.2" fill="#5a9ab2"/><rect x="771.74" y="1221" width="18.5" height="1.5" fill="#2a5a70"/><rect x="771.74" y="1222.5" width="18.5" height="2" fill="#6ab8d8"/><rect x="792.38" y="1217" width="18.5" height="1.5" fill="#2a5a70"/><rect x="792.38" y="1218.5" width="18.5" height="2" fill="#6ab8d8"/><rect x="814.02" y="1170" width="16.5" height="31" fill="none" stroke="#e0736c" stroke-width="2"/><rect x="834.66" y="1172.7" width="16.5" height="13.3" fill="none" stroke="#e0736c" stroke-width="2"/><path d="M863.55 1168 V1176.7" stroke="#5a9cb8" stroke-width="2"/><rect x="854.3" y="1176.7" width="18.5" height="25.3" fill="#7ccdec"/><rect x="854.3" y="1176.7" width="1.8" height="25.3" fill="#5a9ab2"/><rect x="871" y="1176.7" width="1.8" height="25.3" fill="#5a9ab2"/><path d="M884.19 1169 V1179.4" stroke="#c8655e" stroke-width="2"/><rect x="875.94" y="1166.5" width="16.5" height="1.5" fill="none" stroke="#e0736c" stroke-width="2"/><rect x="895.58" y="1173" width="18.5" height="1.5" fill="#2a5a70"/><rect x="895.58" y="1174.5" width="18.5" height="2" fill="#6ab8d8"/><rect x="917.22" y="1166.5" width="16.5" height="8.3" fill="none" stroke="#e0736c" stroke-width="2"/><rect x="998.78" y="1152.4" width="18.5" height="1.5" fill="#2a5a70"/><rect x="998.78" y="1153.9" width="18.5" height="2" fill="#6ab8d8"/><rect x="1019.42" y="1155.8" width="18.5" height="1.5" fill="#2a5a70"/><rect x="1019.42" y="1157.3" width="18.5" height="2" fill="#6ab8d8"/><rect x="1040.06" y="1160.5" width="18.5" height="19.5" fill="#7ccdec"/><rect x="1040.06" y="1160.5" width="1.8" height="19.5" fill="#5a9ab2"/><rect x="1056.76" y="1160.5" width="1.8" height="19.5" fill="#5a9ab2"/><rect x="1061.7" y="1172.7" width="16.5" height="21" fill="none" stroke="#e0736c" stroke-width="2"/><path d="M1152.51 1190.5 V1196.7" stroke="#5a9cb8" stroke-width="2"/><rect x="1143.26" y="1196.7" width="18.5" height="12.3" fill="#7ccdec"/><rect x="1143.26" y="1196.7" width="1.8" height="12.3" fill="#5a9ab2"/><rect x="1159.96" y="1196.7" width="1.8" height="12.3" fill="#5a9ab2"/><rect x="1163.9" y="1199.4" width="18.5" height="1.5" fill="#2a5a70"/><rect x="1163.9" y="1200.9" width="18.5" height="2" fill="#6ab8d8"/><rect x="1185.54" y="1170" width="16.5" height="20" fill="none" stroke="#e0736c" stroke-width="2"/><rect x="1268.1" y="1172.7" width="16.5" height="5.7" fill="none" stroke="#e0736c" stroke-width="2"/><rect x="1287.74" y="1189.7" width="18.5" height="15.3" fill="#7ccdec"/><rect x="1287.74" y="1189.7" width="1.8" height="15.3" fill="#5a9ab2"/><rect x="1304.44" y="1189.7" width="1.8" height="15.3" fill="#5a9ab2"/><path d="M1317.63 1193.9 V1209" stroke="#5a9cb8" stroke-width="2"/><rect x="1308.38" y="1191.9" width="18.5" height="1.5" fill="#2a5a70"/><rect x="1308.38" y="1193.4" width="18.5" height="2" fill="#6ab8d8"/><rect x="1349.66" y="1193.9" width="18.5" height="11.1" fill="#7ccdec"/><rect x="1349.66" y="1193.9" width="1.8" height="11.1" fill="#5a9ab2"/><rect x="1366.36" y="1193.9" width="1.8" height="11.1" fill="#5a9ab2"/><path d="M1379.55 1209 V1212.8" stroke="#c8655e" stroke-width="2"/><rect x="1371.3" y="1194.3" width="16.5" height="13.7" fill="none" stroke="#e0736c" stroke-width="2"/><path d="M1400.19 1183 V1199.7" stroke="#5a9cb8" stroke-width="2"/><rect x="1390.94" y="1197.7" width="18.5" height="1.5" fill="#2a5a70"/><rect x="1390.94" y="1199.2" width="18.5" height="2" fill="#6ab8d8"/><rect x="1411.58" y="1209.7" width="18.5" height="1.5" fill="#2a5a70"/><rect x="1411.58" y="1211.2" width="18.5" height="2" fill="#6ab8d8"/><path d="M1462.11 972.8 V976" stroke="#5a9cb8" stroke-width="2"/><path d="M1462.11 1065 V1092.8" stroke="#5a9cb8" stroke-width="2"/><rect x="1452.86" y="976" width="18.5" height="89" fill="#7ccdec"/><rect x="1452.86" y="976" width="1.8" height="89" fill="#5a9ab2"/><rect x="1469.56" y="976" width="1.8" height="89" fill="#5a9ab2"/><path d="M1482.75 1104.4 V1110.8" stroke="#5a9cb8" stroke-width="2"/><rect x="1473.5" y="1055" width="18.5" height="49.4" fill="#7ccdec"/><rect x="1473.5" y="1055" width="1.8" height="49.4" fill="#5a9ab2"/><rect x="1490.2" y="1055" width="1.8" height="49.4" fill="#5a9ab2"/><path d="M1503.39 1074 V1088.6" stroke="#5a9cb8" stroke-width="2"/><rect x="1494.14" y="1088.6" width="18.5" height="12.4" fill="#7ccdec"/><rect x="1494.14" y="1088.6" width="1.8" height="12.4" fill="#5a9ab2"/><rect x="1510.84" y="1088.6" width="1.8" height="12.4" fill="#5a9ab2"/><path d="M1524.03 1115 V1133" stroke="#5a9cb8" stroke-width="2"/><rect x="1514.78" y="1106.7" width="18.5" height="8.3" fill="#7ccdec"/><rect x="1514.78" y="1106.7" width="1.8" height="8.3" fill="#5a9ab2"/><rect x="1531.48" y="1106.7" width="1.8" height="8.3" fill="#5a9ab2"/><rect x="1535.42" y="1113.6" width="18.5" height="65.8" fill="#7ccdec"/><rect x="1535.42" y="1113.6" width="1.8" height="65.8" fill="#5a9ab2"/><rect x="1552.12" y="1113.6" width="1.8" height="65.8" fill="#5a9ab2"/><rect x="1576.7" y="1131.7" width="18.5" height="38.3" fill="#7ccdec"/><rect x="1576.7" y="1131.7" width="1.8" height="38.3" fill="#5a9ab2"/><rect x="1593.4" y="1131.7" width="1.8" height="38.3" fill="#5a9ab2"/><rect x="1597.34" y="1133" width="18.5" height="4" fill="#7ccdec"/><rect x="1597.34" y="1133" width="1.8" height="4" fill="#5a9ab2"/><rect x="1614.04" y="1133" width="1.8" height="4" fill="#5a9ab2"/><rect x="1638.62" y="1134.4" width="18.5" height="1.5" fill="#2a5a70"/><rect x="1638.62" y="1135.9" width="18.5" height="2" fill="#6ab8d8"/><path d="M1668.51 1191.4 V1198" stroke="#5a9cb8" stroke-width="2"/><rect x="1659.26" y="1146" width="18.5" height="45.4" fill="#7ccdec"/><rect x="1659.26" y="1146" width="1.8" height="45.4" fill="#5a9ab2"/><rect x="1675.96" y="1146" width="1.8" height="45.4" fill="#5a9ab2"/><rect x="1679.9" y="1157" width="18.5" height="7.4" fill="#7ccdec"/><rect x="1679.9" y="1157" width="1.8" height="7.4" fill="#5a9ab2"/><rect x="1696.6" y="1157" width="1.8" height="7.4" fill="#5a9ab2"/><rect x="1701.54" y="1154.9" width="16.5" height="6.3" fill="none" stroke="#e0736c" stroke-width="2"/><rect x="1721.18" y="1176.9" width="18.5" height="1.5" fill="#2a5a70"/><rect x="1721.18" y="1178.4" width="18.5" height="2" fill="#6ab8d8"/><path d="M1771.71 1183 V1198" stroke="#c8655e" stroke-width="2"/><rect x="1763.46" y="1179.3" width="16.5" height="2.7" fill="none" stroke="#e0736c" stroke-width="2"/><path d="M1812.99 1194 V1213.6" stroke="#c8655e" stroke-width="2"/><rect x="1804.74" y="1173" width="16.5" height="20" fill="none" stroke="#e0736c" stroke-width="2"/><rect x="1824.38" y="1156" width="18.5" height="1.5" fill="#2a5a70"/><rect x="1824.38" y="1157.5" width="18.5" height="2" fill="#6ab8d8"/><rect x="1846.02" y="1132.7" width="16.5" height="39.6" fill="none" stroke="#e0736c" stroke-width="2"/><path d="M1874.91 1131.7 V1135.8" stroke="#5a9cb8" stroke-width="2"/><rect x="1865.66" y="1135.8" width="18.5" height="22.2" fill="#7ccdec"/><rect x="1865.66" y="1135.8" width="1.8" height="22.2" fill="#5a9ab2"/><rect x="1882.36" y="1135.8" width="1.8" height="22.2" fill="#5a9ab2"/><path d="M1978.11 1160.8 V1165" stroke="#5a9cb8" stroke-width="2"/><rect x="1968.86" y="1158.8" width="18.5" height="1.5" fill="#2a5a70"/><rect x="1968.86" y="1160.3" width="18.5" height="2" fill="#6ab8d8"/><rect x="2010.14" y="1164.4" width="18.5" height="8.9" fill="#7ccdec"/><rect x="2010.14" y="1164.4" width="1.8" height="8.9" fill="#5a9ab2"/><rect x="2026.84" y="1164.4" width="1.8" height="8.9" fill="#5a9ab2"/><rect x="2031.78" y="1151.6" width="16.5" height="13" fill="none" stroke="#e0736c" stroke-width="2"/><rect x="2072.06" y="1137.4" width="18.5" height="1.5" fill="#2a5a70"/><rect x="2072.06" y="1138.9" width="18.5" height="2" fill="#6ab8d8"/><path d="M2122.59 1128.9 V1151" stroke="#c8655e" stroke-width="2"/><rect x="2114.34" y="1152" width="16.5" height="8.7" fill="none" stroke="#e0736c" stroke-width="2"/><rect x="2134.98" y="887" width="16.5" height="237.6" fill="none" stroke="#e0736c" stroke-width="2"/><path d="M2163.87 766 V857" stroke="#c8655e" stroke-width="2"/><path d="M2163.87 886 V972.6" stroke="#c8655e" stroke-width="2"/><rect x="2155.62" y="858" width="16.5" height="27" fill="none" stroke="#e0736c" stroke-width="2"/><path d="M2184.51 819.5 V834.7" stroke="#c8655e" stroke-width="2"/><path d="M2184.51 904.8 V981" stroke="#c8655e" stroke-width="2"/><rect x="2176.26" y="835.7" width="16.5" height="68.1" fill="none" stroke="#e0736c" stroke-width="2"/><path d="M2205.15 502.5 V635.4" stroke="#c8655e" stroke-width="2"/><rect x="2196.9" y="636.4" width="16.5" height="227.6" fill="none" stroke="#e0736c" stroke-width="2"/><path d="M2225.79 622 V638.7" stroke="#5a9cb8" stroke-width="2"/><path d="M2225.79 887.3 V911.4" stroke="#5a9cb8" stroke-width="2"/><rect x="2216.54" y="638.7" width="18.5" height="248.6" fill="#7ccdec"/><rect x="2216.54" y="638.7" width="1.8" height="248.6" fill="#5a9ab2"/><rect x="2233.24" y="638.7" width="1.8" height="248.6" fill="#5a9ab2"/><path d="M2246.43 868.4 V878.3" stroke="#5a9cb8" stroke-width="2"/><path d="M2246.43 969.3 V981.7" stroke="#5a9cb8" stroke-width="2"/><rect x="2237.18" y="878.3" width="18.5" height="91" fill="#7ccdec"/><rect x="2237.18" y="878.3" width="1.8" height="91" fill="#5a9ab2"/><rect x="2253.88" y="878.3" width="1.8" height="91" fill="#5a9ab2"/><path d="M2267.07 1058 V1067.8" stroke="#5a9cb8" stroke-width="2"/><rect x="2257.82" y="965" width="18.5" height="93" fill="#7ccdec"/><rect x="2257.82" y="965" width="1.8" height="93" fill="#5a9ab2"/><rect x="2274.52" y="965" width="1.8" height="93" fill="#5a9ab2"/><path d="M2287.71 993.9 V1049.4" stroke="#c8655e" stroke-width="2"/><path d="M2287.71 1056.6 V1064" stroke="#c8655e" stroke-width="2"/><rect x="2279.46" y="1050.4" width="16.5" height="5.2" fill="none" stroke="#e0736c" stroke-width="2"/><path d="M2308.35 1020.3 V1048" stroke="#5a9cb8" stroke-width="2"/><rect x="2299.1" y="1048" width="18.5" height="49" fill="#7ccdec"/><rect x="2299.1" y="1048" width="1.8" height="49" fill="#5a9ab2"/><rect x="2315.8" y="1048" width="1.8" height="49" fill="#5a9ab2"/><path d="M2328.99 1081 V1098.4" stroke="#5a9cb8" stroke-width="2"/><path d="M2328.99 1111.6 V1126" stroke="#5a9cb8" stroke-width="2"/><rect x="2319.74" y="1098.4" width="18.5" height="13.2" fill="#7ccdec"/><rect x="2319.74" y="1098.4" width="1.8" height="13.2" fill="#5a9ab2"/><rect x="2336.44" y="1098.4" width="1.8" height="13.2" fill="#5a9ab2"/><path d="M2349.63 1158.7 V1173.7" stroke="#5a9cb8" stroke-width="2"/><rect x="2340.38" y="1098.4" width="18.5" height="60.3" fill="#7ccdec"/><rect x="2340.38" y="1098.4" width="1.8" height="60.3" fill="#5a9ab2"/><rect x="2357.08" y="1098.4" width="1.8" height="60.3" fill="#5a9ab2"/><path d="M2370.27 1139.4 V1146" stroke="#c8655e" stroke-width="2"/><path d="M2370.27 1151.8 V1173.7" stroke="#c8655e" stroke-width="2"/><rect x="2362.02" y="1147" width="16.5" height="3.8" fill="none" stroke="#e0736c" stroke-width="2"/><path d="M2390.91 1124.8 V1146" stroke="#5a9cb8" stroke-width="2"/><path d="M2390.91 1165.8 V1169.8" stroke="#5a9cb8" stroke-width="2"/><rect x="2381.66" y="1146" width="18.5" height="19.8" fill="#7ccdec"/><rect x="2381.66" y="1146" width="1.8" height="19.8" fill="#5a9ab2"/><rect x="2398.36" y="1146" width="1.8" height="19.8" fill="#5a9ab2"/><path d="M2411.55 1135.4 V1157" stroke="#c8655e" stroke-width="2"/><path d="M2411.55 1165.8 V1173.7" stroke="#c8655e" stroke-width="2"/><rect x="2403.3" y="1158" width="16.5" height="6.8" fill="none" stroke="#e0736c" stroke-width="2"/><path d="M2432.19 1198.9 V1209.4" stroke="#5a9cb8" stroke-width="2"/><rect x="2422.94" y="1160.5" width="18.5" height="38.4" fill="#7ccdec"/><rect x="2422.94" y="1160.5" width="1.8" height="38.4" fill="#5a9ab2"/><rect x="2439.64" y="1160.5" width="1.8" height="38.4" fill="#5a9ab2"/><path d="M2452.83 1213.4 V1257" stroke="#5a9cb8" stroke-width="2"/><rect x="2443.58" y="1182.5" width="18.5" height="30.9" fill="#7ccdec"/><rect x="2443.58" y="1182.5" width="1.8" height="30.9" fill="#5a9ab2"/><rect x="2460.28" y="1182.5" width="1.8" height="30.9" fill="#5a9ab2"/><rect x="2465.22" y="1197.7" width="16.5" height="13.9" fill="none" stroke="#e0736c" stroke-width="2"/><path d="M2494.11 1157 V1182.5" stroke="#c8655e" stroke-width="2"/><rect x="2485.86" y="1183.5" width="16.5" height="14.4" fill="none" stroke="#e0736c" stroke-width="2"/><path d="M2514.75 1153.9 V1156.5" stroke="#c8655e" stroke-width="2"/><path d="M2514.75 1172.4 V1183.5" stroke="#c8655e" stroke-width="2"/><rect x="2506.5" y="1157.5" width="16.5" height="13.9" fill="none" stroke="#e0736c" stroke-width="2"/><rect x="2526.14" y="1178.2" width="18.5" height="4.8" fill="#7ccdec"/><rect x="2526.14" y="1178.2" width="1.8" height="4.8" fill="#5a9ab2"/><rect x="2542.84" y="1178.2" width="1.8" height="4.8" fill="#5a9ab2"/><path d="M2556.03 1164.5 V1171" stroke="#5a9cb8" stroke-width="2"/><rect x="2546.78" y="1171" width="18.5" height="59.6" fill="#7ccdec"/><rect x="2546.78" y="1171" width="1.8" height="59.6" fill="#5a9ab2"/><rect x="2563.48" y="1171" width="1.8" height="59.6" fill="#5a9ab2"/><path d="M2576.67 1182.5 V1192.2" stroke="#c8655e" stroke-width="2"/><rect x="2568.42" y="1193.2" width="16.5" height="14.8" fill="none" stroke="#e0736c" stroke-width="2"/><rect x="2588.06" y="1190" width="18.5" height="1.5" fill="#2a5a70"/><rect x="2588.06" y="1191.5" width="18.5" height="2" fill="#6ab8d8"/><path d="M2617.95 1179.3 V1186.8" stroke="#c8655e" stroke-width="2"/><rect x="2609.7" y="1187.8" width="16.5" height="6.8" fill="none" stroke="#e0736c" stroke-width="2"/><path d="M2638.59 1175.5 V1189.4" stroke="#c8655e" stroke-width="2"/><path d="M2638.59 1195.6 V1212" stroke="#c8655e" stroke-width="2"/><rect x="2630.34" y="1190.4" width="16.5" height="4.2" fill="none" stroke="#e0736c" stroke-width="2"/><path d="M2659.23 1205.7 V1219.5" stroke="#5a9cb8" stroke-width="2"/><rect x="2649.98" y="1196.9" width="18.5" height="8.8" fill="#7ccdec"/><rect x="2649.98" y="1196.9" width="1.8" height="8.8" fill="#5a9ab2"/><rect x="2666.68" y="1196.9" width="1.8" height="8.8" fill="#5a9ab2"/><path d="M2679.87 1194.4 V1208" stroke="#c8655e" stroke-width="2"/><path d="M2679.87 1215.7 V1227" stroke="#c8655e" stroke-width="2"/><rect x="2671.62" y="1209" width="16.5" height="5.7" fill="none" stroke="#e0736c" stroke-width="2"/><path d="M28 1323.8 C38.05 1323.72 112.6 1325.87 148.6 1322.8 C184.6 1319.73 418.3 1291.73 460 1287 C501.7 1282.27 621.25 1269.02 649 1266 C676.75 1262.98 768.75 1253.11 793 1250.8 C817.25 1248.49 908.92 1241.03 940 1238.3 C971.08 1235.57 1144.53 1220.11 1166 1218 C1187.47 1215.89 1187.45 1214.08 1197.7 1213 C1207.95 1211.92 1272.14 1206.32 1289 1205 C1305.86 1203.68 1387.58 1198.17 1400 1197.2 C1412.42 1196.23 1419.61 1195.48 1438 1193.4 C1456.39 1191.33 1598.87 1174.4 1620.7 1172.3 C1642.53 1170.2 1674.45 1168.32 1700 1168.2 C1725.55 1168.08 1892 1170.99 1927.3 1170.9 C1962.6 1170.81 2100.88 1168.88 2123.6 1167.1 C2146.32 1165.32 2191.22 1151.61 2200 1149.6 C2208.78 1147.59 2218.83 1144.14 2229 1143 C2239.17 1141.86 2302.58 1136.49 2322 1135.9 C2341.42 1135.31 2430.46 1135.67 2462 1135.9 C2493.54 1136.13 2680.62 1138.47 2700.5 1138.7" fill="none" stroke="#4848d8" stroke-width="2"/><path d="M28 1321 C37.48 1320.71 129.22 1318.6 141.7 1317.5 C154.18 1316.4 172.03 1310.01 177.8 1307.8 C183.58 1305.59 203.37 1294.23 211 1291 C218.63 1287.77 261.52 1272.12 269.4 1269 C277.28 1265.88 297.27 1256.16 305.6 1253.6 C313.93 1251.04 360.14 1240.96 369.4 1238.3 C378.66 1235.64 410.82 1223.81 416.7 1221.7 C422.58 1219.59 434.62 1214.76 440 1213 C445.38 1211.24 474.42 1202.5 481.3 1200.6 C488.18 1198.7 513.99 1192.27 522.6 1190.2 C531.21 1188.13 575.98 1177.6 584.6 1175.8 C593.22 1174 619.11 1169.81 626 1168.6 C632.89 1167.39 660.42 1161.91 667.3 1161.3 C674.18 1160.69 701.71 1161.04 708.6 1161.3 C715.49 1161.56 743.12 1163.71 750 1164.4 C756.88 1165.09 784.32 1168.82 791.2 1169.6 C798.08 1170.38 825.71 1173.05 832.6 1173.7 C839.49 1174.35 864.95 1176.88 873.9 1177.4 C882.85 1177.93 926.24 1180.17 940 1180 C953.76 1179.83 1019.18 1175.7 1039 1175.4 C1058.82 1175.1 1147.72 1176.16 1177.8 1176.4 C1207.88 1176.64 1378.87 1177.77 1400 1178.3 C1421.13 1178.83 1418.85 1183.59 1431.4 1182.8 C1443.95 1182.01 1528.22 1170.22 1550.6 1168.8 C1572.98 1167.38 1675.5 1166.35 1700 1165.7 C1724.5 1165.05 1825.66 1161.97 1844.6 1161 C1863.54 1160.03 1916.97 1154.43 1927.3 1154 C1937.63 1153.57 1959.99 1155.22 1968.6 1155.8 C1977.21 1156.38 2017.68 1160.74 2030.6 1161 C2043.52 1161.26 2114.98 1159.42 2123.6 1158.9 C2132.22 1158.38 2130.92 1156.9 2134 1154.8 C2137.08 1152.7 2154.88 1137.79 2160.6 1133.7 C2166.32 1129.61 2195.11 1110.09 2202.7 1105.7 C2210.29 1101.31 2241.76 1084.22 2251.7 1081 C2261.64 1077.78 2309.14 1068.04 2322 1067 C2334.86 1065.96 2394.33 1067.92 2406 1068.5 C2417.67 1069.08 2451.5 1073.41 2462 1074 C2472.5 1074.59 2517.42 1074.71 2532 1075.6 C2546.58 1076.49 2622.96 1080.43 2637 1084.7 C2651.04 1088.97 2695.21 1123.29 2700.5 1126.8" fill="none" stroke="#e8801e" stroke-width="1.7"/><polyline points="28.2,1320 141,1317.7 153.7,1289.5 169,1246 205,1205 243,1158.8 266.4,1158.8 287,1161.4 317.7,1158.8 512,1160.4 640.5,1165 1240,1166.5 1420.9,1168.8 1452.4,1056.6 1470,1007.5 1501.5,1021.6 1522.5,1042.6 1543.6,1081 1648.7,1082.6 1669.8,1098.7 1768,1102 1810,1114.8 2118.5,1119.7 2139.6,1081 2164,976 2181.6,969 2195.7,856.8 2230.7,842.8 2251.6,852.8 2272.8,870.8 2350,902.4 2406,912.9 2448,927 2532,934 2637.4,937.4 2700.5,943" fill="none" stroke="#c4c8cc" stroke-width="1.6"/><polyline points="28.2,1315 51,1307 118,1293 148.6,1287 169,1262 190.8,1240 264.4,1124.4 292,1132 328,1128 369,1152 404.8,1142.4 430.4,1146 440,1157.2 469,1151 487.5,1162.4 531,1187.1 574.3,1197.5 626,1186 646.6,1180 688,1172.7 716.9,1162.4 762.3,1163.4 799.5,1187.1 861.5,1197.5 898.7,1177.9 920,1176 947.8,1175 965.6,1167.4 1003.3,1163.5 1043,1164.5 1104.5,1168.4 1134.2,1174.4 1164,1183.3 1201.6,1185 1237.3,1182.3 1275,1169.4 1287,1171.4 1352.4,1194.2 1400,1200 1438,1207 1543.6,1112.7 1592.6,1151.3 1627.7,1159.7 1648.7,1150 1690.8,1151.3 1718.6,1158.9 1749.6,1173.3 1813.6,1178.5 1844.6,1169.2 1875.6,1160 1927.3,1150.6 1968.6,1155.8 2020.2,1160 2072,1156.8 2121.5,1146.5 2142,1100 2150,1088 2181.6,976 2215.9,843.7 2226.2,820.6 2235.7,827 2251.7,842.8 2286.8,919.9 2307.8,1011 2350,1102 2392,1130 2434,1172.3 2483,1186 2532,1186 2574,1189.8 2637,1193 2700.5,1200" fill="none" stroke="#9ccc50" stroke-width="1.6"/><path d="M28 737 H2710" stroke="#8b4c17" stroke-width="2"/><path d="M28 856.5 H2710" stroke="#7a4214" stroke-width="2"/><path d="M28 1349 H148" stroke="#00e000" stroke-width="2"/><path d="M152 1289 H1430" stroke="#00e000" stroke-width="2"/><path d="M28 1214.8 H2710" stroke="#f0e4cc" stroke-width="1.6"/><path d="M1432 1213.2 H2710" stroke="#00e400" stroke-width="1.8"/><path d="M1437 663 L2223.5 733" stroke="#e8e8e8" stroke-width="2"/><path d="M1880.8 835 L2228.5 853.6" stroke="#e8e8e8" stroke-width="2"/><circle cx="2223.5" cy="733" r="5" fill="none" stroke="#f0f0f0" stroke-width="1.5"/><circle cx="2228.5" cy="853.6" r="5" fill="none" stroke="#f0f0f0" stroke-width="1.5"/><path d="M135 404 L138 398 L141 404 Z" fill="#2f58a8"/><rect x="122" y="404" width="31" height="26" rx="3" fill="#2f58a8"/><path d="M2709.6 1215.7 L2723.4 1197.4 H2839.8 V1235 H2723.4 Z" fill="#e6dac4"/><rect x="2706" y="398" width="100" height="16" fill="#d8d8d8"/><rect x="1474.6" y="1640.6" width="257" height="36.7" fill="#e0e0e0"/></svg>
<div class="r" style="left:1289px;top:518.4px;width:148px;height:145px;background:#ffffff;box-sizing:border-box;border:2px solid #8a8a8a"></div>
<div class="t" style="left:1297.42px;top:533.51px;font-size:27.29px;line-height:27.29px;color:#101828;letter-spacing:1.36px">1453</div>
<div class="t" style="left:1297.43px;top:567.93px;font-size:27.14px;line-height:27.14px;color:#101828;letter-spacing:0.78px">1433G</div>
<div class="j" style="left:1295.12px;top:597.8px;width:53.26px;font-size:33.8px;line-height:33.8px;color:#101828">負け</div>
<div class="r" style="left:1348px;top:613.5px;width:8px;height:2px;background:#101828"></div>
<div class="t" style="left:1358.53px;top:600.61px;font-size:27.29px;line-height:27.29px;color:#101828;letter-spacing:1.19px">20</div>
<div class="r" style="left:1702.3px;top:837.2px;width:177.7px;height:192px;background:#ffffff;box-sizing:border-box;border:2px solid #8a8a8a"></div>
<div class="t" style="left:1711.73px;top:851.93px;font-size:27.14px;line-height:27.14px;color:#101828;letter-spacing:1.32px">1420</div>
<div class="t" style="left:1711.79px;top:886.04px;font-size:26.43px;line-height:26.43px;color:#101828;letter-spacing:1.89px">1409</div>
<div class="t" style="left:1711.74px;top:918.55px;font-size:27px;line-height:27px;color:#101828;letter-spacing:1.65px">1398(1409)</div>
<div class="t" style="left:1711.78px;top:953.41px;font-size:26.57px;line-height:26.57px;color:#101828;letter-spacing:1.11px">1375G</div>
<div class="j" style="left:1710.1px;top:985.8px;width:44.3px;font-size:29.02px;line-height:29.02px;color:#101828">負け</div>
<div class="r" style="left:1753.6px;top:999.5px;width:8.2px;height:2px;background:#101828"></div>
<div class="t" style="left:1764.97px;top:986.43px;font-size:27.14px;line-height:27.14px;color:#101828;letter-spacing:8.44px">34</div>
<svg class="s" style="left:1729px;top:399px" width="4" height="1243"><path d="M2 0 V1243" stroke="#a0a0a0" stroke-width="1.5" stroke-dasharray="2 2"/></svg>
<div class="t" style="left:2059.82px;top:450.61px;font-size:22.57px;line-height:22.57px;color:#f57f6e;letter-spacing:2.18px">09/13 13:00</div>
<div class="j" style="left:2067.61px;top:471.96px;width:48.38px;font-size:29.9px;line-height:29.9px;color:#f57f6e">高値</div>
<div class="t" style="left:2122.62px;top:476.7px;font-size:22px;line-height:22px;color:#f57f6e;letter-spacing:2.19px">1518.0</div>
<div class="t" style="left:39.64px;top:1325.3px;font-size:22px;line-height:22px;color:#7ec4e6;letter-spacing:2.41px">09/09 14:35</div>
<div class="j" style="left:37.51px;top:1348.96px;width:48.78px;font-size:29.9px;line-height:29.9px;color:#7ec4e6">安値</div>
<div class="t" style="left:91.34px;top:1353.12px;font-size:21.86px;line-height:21.86px;color:#7ec4e6;letter-spacing:2.13px">1292.0</div>
<div class="t" style="left:130.12px;top:406.57px;font-size:22.86px;line-height:22.86px;color:#ffffff">N</div>
<div class="j" style="left:29.75px;top:1448.15px;width:82.5px;font-size:32.5px;line-height:32.5px;color:#c4c4c4">出来高</div>
<div class="t" style="left:2711.45px;top:557.36px;font-size:24.29px;line-height:24.29px;color:#a9b6c4;letter-spacing:3.43px">1,500</div>
<div class="t" style="left:2711.45px;top:738.36px;font-size:24.29px;line-height:24.29px;color:#a9b6c4;letter-spacing:3.43px">1,450</div>
<div class="t" style="left:2711.45px;top:919.36px;font-size:24.29px;line-height:24.29px;color:#a9b6c4;letter-spacing:3.43px">1,400</div>
<div class="t" style="left:2711.45px;top:1100.86px;font-size:24.29px;line-height:24.29px;color:#a9b6c4;letter-spacing:3.43px">1,350</div>
<div class="t" style="left:2711.45px;top:1280.86px;font-size:24.29px;line-height:24.29px;color:#a9b6c4;letter-spacing:3.43px">1,300</div>
<div class="t" style="left:2711.15px;top:1450.86px;font-size:24.29px;line-height:24.29px;color:#a9b6c4;letter-spacing:3.17px">100,000</div>
<div class="t" style="left:2712.03px;top:1540.36px;font-size:24.29px;line-height:24.29px;color:#a9b6c4;letter-spacing:0.93px">50,000</div>
<div class="r" style="left:2700px;top:1636px;width:40px;height:7px;overflow:hidden"><div class="t" style="left:12.05px;top:-2.64px;font-size:24.29px;line-height:24.29px;color:#a9b6c4">0</div></div>
<div class="t" style="left:112.53px;top:1648.29px;font-size:24.71px;line-height:24.71px;color:#a9b6c4;letter-spacing:3.52px">09:00</div>
<div class="t" style="left:359.62px;top:1648.29px;font-size:24.71px;line-height:24.71px;color:#a9b6c4;letter-spacing:3.75px">10:00</div>
<div class="t" style="left:607.62px;top:1648.29px;font-size:24.71px;line-height:24.71px;color:#a9b6c4;letter-spacing:3.75px">11:00</div>
<div class="t" style="left:751.62px;top:1648.29px;font-size:24.71px;line-height:24.71px;color:#a9b6c4;letter-spacing:3.75px">12:30</div>
<div class="t" style="left:875.62px;top:1648.29px;font-size:24.71px;line-height:24.71px;color:#a9b6c4;letter-spacing:3.75px">13:00</div>
<div class="t" style="left:1123.62px;top:1648.29px;font-size:24.71px;line-height:24.71px;color:#a9b6c4;letter-spacing:3.75px">14:00</div>
<div class="t" style="left:1392.53px;top:1648.29px;font-size:24.71px;line-height:24.71px;color:#a9b6c4;letter-spacing:3.52px">09:00</div>
<div class="t" style="left:1887.62px;top:1648.29px;font-size:24.71px;line-height:24.71px;color:#a9b6c4;letter-spacing:3.75px">11:00</div>
<div class="t" style="left:2031.62px;top:1648.29px;font-size:24.71px;line-height:24.71px;color:#a9b6c4;letter-spacing:3.75px">12:30</div>
<div class="t" style="left:2155.62px;top:1648.29px;font-size:24.71px;line-height:24.71px;color:#a9b6c4;letter-spacing:3.75px">13:00</div>
<div class="t" style="left:2403.62px;top:1648.29px;font-size:24.71px;line-height:24.71px;color:#a9b6c4;letter-spacing:3.75px">14:00</div>
<div class="t" style="left:1487.41px;top:1647.14px;font-size:25.71px;line-height:25.71px;color:#1a1a1a;letter-spacing:2.43px">2021/09/13 10:10</div>
<div class="t" style="left:2727.78px;top:1204.43px;font-size:25.14px;line-height:25.14px;color:#101010;letter-spacing:2.84px">1,321.0</div>
<div class="r" style="left:2706px;top:398px;width:100px;height:16px;overflow:hidden"><div class="t" style="left:6.45px;top:-11.24px;font-size:24.29px;line-height:24.29px;color:#202020;letter-spacing:0.56px">1,346.3</div></div>
<div class="r" style="left:0px;top:1720px;width:2880px;height:80px;background:#d2e4ed"></div>
<svg class="s" style="left:32px;top:1744px;" width="32" height="32" viewBox="0 0 32 32"><path d="M0 4 L13 2.2 V15 H0 Z M14.5 2 L32 0 V15 H14.5 Z M0 16.5 H13 V29.5 L0 27.8 Z M14.5 16.5 H32 V32 L14.5 29.8 Z" fill="#000"/></svg>
<div class="r" style="left:96px;top:1720px;width:688px;height:80px;background:#c6c6c6"></div>
<div class="r" style="left:98px;top:1722px;width:684px;height:78px;background:#ffffff"></div>
<svg class="s" style="left:120px;top:1744px;" width="32" height="32" viewBox="0 0 32 32"><g fill="none" stroke="#111" stroke-width="2.6"><circle cx="21" cy="10.5" r="9"/><path d="M14.5 17 L2 30"/></g></svg>
<div class="j" style="left:173.36px;top:1745.21px;width:229.78px;font-size:33.38px;line-height:33.38px;color:#2a2a2a">ここに入力して検索</div>
<svg class="s" style="left:814px;top:1745px;" width="34" height="30" viewBox="0 0 34 30"><g fill="none" stroke="#111" stroke-width="2.4"><path d="M0 2 H20 M0 28 H20 M3 8 H17 V22 H3 Z"/><path d="M28 2 V4 M28 16 V28"/></g><circle cx="28" cy="10" r="3" fill="#111"/></svg>
<div class="r" style="left:892px;top:1731.5px;width:2.5px;height:56.5px;background:#111"></div>
<div class="r" style="left:898px;top:1731.5px;width:2.5px;height:56.5px;background:#111"></div>
<svg class="s" style="left:948px;top:1742px;" width="42" height="34" viewBox="0 0 42 34"><path d="M0 2 H14 L17 6 H42 V33 H0 Z" fill="#e8a800"/><rect x="0" y="8" width="42" height="26" fill="#ffd257"/><path d="M11 34 V20 H31 V34 H25 V26 H17 V34 Z" fill="#1f7bd8"/></svg>
<div class="r" style="left:930px;top:1796px;width:80px;height:4px;background:#0a6cd6"></div>
<svg class="s" style="left:1045px;top:1739px;" width="45" height="45" viewBox="0 0 45 45"><circle cx="22.5" cy="22.5" r="22.5" fill="#db4437"/><path d="M22.5 22.5 L3 11.25 A22.5 22.5 0 0 0 22.5 45 Z" fill="#0f9d58"/><path d="M22.5 22.5 L22.5 45 A22.5 22.5 0 0 0 42 11.25 Z" fill="#ffcd40"/><circle cx="22.5" cy="22.5" r="10" fill="#fff"/><circle cx="22.5" cy="22.5" r="8" fill="#4a8af4"/></svg>
<div class="r" style="left:1028px;top:1796px;width:80px;height:4px;background:#0a6cd6"></div>
<svg class="s" style="left:1142px;top:1736px;" width="48" height="47" viewBox="0 0 48 47"><rect width="48" height="47" fill="#0a78d4"/><path d="M12 14 L32 12 V36 L12 34 Z" fill="#fff"/><rect x="33" y="15" width="6" height="8" fill="#fff"/><rect x="33" y="25" width="6" height="8" fill="#fff"/><text x="22" y="25" text-anchor="middle" font-family="Liberation Sans" font-size="6" fill="#0a78d4">12:00</text></svg>
<svg class="s" style="left:1239px;top:1736px;" width="50" height="48" viewBox="0 0 50 48"><rect x="12" y="2" width="37" height="30" fill="#4aa8e8" stroke="#2a7ab8" stroke-width="2"/><path d="M14 30 L47 4 V30 Z" fill="#78c8f0"/><circle cx="11" cy="33" r="9" fill="rgba(200,220,235,0.6)" stroke="#777" stroke-width="2"/><path d="M17 39 L25 47" stroke="#555" stroke-width="3"/></svg>
<div class="r" style="left:1314px;top:1720px;width:89px;height:80px;background:#e4eef4"></div>
<div class="r" style="left:1403px;top:1720px;width:2px;height:80px;background:#b8c8d2"></div>
<svg class="s" style="left:1338.5px;top:1736.5px;" width="46" height="46" viewBox="0 0 46 46"><circle cx="23" cy="23" r="23" fill="#0a0a0a"/><g fill="#fff"><rect x="11" y="20" width="3" height="12"/><rect x="17" y="24" width="3" height="14"/><rect x="23" y="19" width="3" height="12"/><rect x="29" y="17" width="3" height="10"/><rect x="35" y="13" width="3" height="12"/></g><text x="16" y="16" font-family="Liberation Sans" font-size="9" font-weight="bold" fill="#fff">R</text></svg>
<div class="r" style="left:1314px;top:1796px;width:96px;height:4px;background:#0a6cd6"></div>
<svg class="s" style="left:1439px;top:1738px;" width="42" height="43" viewBox="0 0 42 43"><rect width="42" height="43" fill="#2a9ae8"/><path d="M0 43 V30 L13 17 L30 32 L42 24 V43 Z" fill="#1a4a8c"/><path d="M22 26 L30 20 L42 30 V43 H30 Z" fill="#3a7ad0"/><circle cx="29" cy="10" r="4" fill="#fff"/></svg>
<div class="r" style="left:1419.5px;top:1796px;width:64.5px;height:4px;background:#0a6cd6"></div>
<div class="r" style="left:1484px;top:1796px;width:15.5px;height:4px;background:#6aa8e0"></div>
<div class="r" style="left:1634.4px;top:1732px;width:2.4px;height:55px;background:#111"></div>
<div class="r" style="left:1641px;top:1732px;width:2.4px;height:55px;background:#111"></div>
<div class="j" style="left:1657.29px;top:1746.89px;width:110.41px;font-size:24.07px;line-height:24.07px;color:#1a1a1a">デスクトップ</div>
<svg class="s" style="left:1780px;top:1728px;" width="16" height="11" viewBox="0 0 16 11"><path d="M1 1 L6 5.5 L1 10 M9 1 L14 5.5 L9 10" fill="none" stroke="#6a6ab4" stroke-width="2.4"/></svg>
<svg class="s" style="left:1870px;top:1730px;" width="56" height="52" viewBox="0 0 56 52"><path d="M22 9 Q33 13 31.5 20 L21 30 Q13 33.5 7 27 Q16 26 20 20 Q23.5 14 22 9 Z" fill="#f6c400"/><path d="M13 47 Q5.5 46.5 5.5 40 Q6 33 13 32 Q16 21.5 27 21.5 Q35 21.5 38 27.5 Q48 26 50.5 35 Q51 47 42 47 Z" fill="#cbe9fa" stroke="#a8cfe6" stroke-width="1.5"/><path d="M17 44 Q12 40 16 35 Q20 31 25 33 Q28 27 34 29" fill="none" stroke="#a6dcf8" stroke-width="3"/></svg>
<div class="t" style="left:1937.97px;top:1747.42px;font-size:28.5px;line-height:28.5px;color:#1a1a1a">24</div>
<div class="t" style="left:1968.3px;top:1747.42px;font-size:28.5px;line-height:28.5px;color:#1a1a1a">°C</div>
<div class="j" style="left:2012.05px;top:1747.14px;width:112.91px;font-size:29.54px;line-height:29.54px;color:#1a1a1a">くもり時々</div>
<div class="j" style="left:2126.09px;top:1743.34px;width:56.62px;font-size:37.09px;line-height:37.09px;color:#1a1a1a">晴れ</div>
<svg class="s" style="left:2222px;top:1751px;" width="26" height="16" viewBox="0 0 26 16"><path d="M1 15 L13 2 L25 15" fill="none" stroke="#111" stroke-width="2.2"/></svg>
<svg class="s" style="left:2288.5px;top:1745px;" width="23" height="30" viewBox="0 0 23 30"><g fill="none" stroke="#111" stroke-width="2"><rect x="2" y="9" width="13" height="12" rx="2"/><path d="M15 12 L21 9 V21 L15 18"/><path d="M4 4 Q11 -1 18 4 M4 26 Q11 31 18 26"/></g></svg>
<svg class="s" style="left:2346px;top:1748px;" width="34" height="22" viewBox="0 0 34 22"><g fill="#111"><rect x="3" y="0" width="2" height="4.5"/><rect x="8" y="0" width="2" height="4.5"/><rect x="5.5" y="13" width="2" height="9"/><rect x="31.5" y="7" width="2" height="6"/><rect x="11" y="7.5" width="18" height="10"/></g><path d="M1.5 4.5 H11.5 V8.5 Q11.5 13.5 6.5 13.5 Q1.5 13.5 1.5 8.5 Z" fill="none" stroke="#111" stroke-width="2"/><path d="M11 4.5 H31 V20.5 H9.5" fill="none" stroke="#111" stroke-width="2.2"/></svg>
<svg class="s" style="left:2416px;top:1749px;" width="26" height="26" viewBox="0 0 26 26"><g fill="none" stroke="#111" stroke-width="2"><path d="M1 25 A24 24 0 0 1 25 1"/><path d="M7 25 A18 18 0 0 1 25 7"/><path d="M13 25 A12 12 0 0 1 25 13"/></g><circle cx="21.5" cy="22" r="2.6" fill="#111"/></svg>
<svg class="s" style="left:2474px;top:1746px;" width="34" height="28" viewBox="0 0 34 28"><path d="M2 10 H8 L15 3 V25 L8 18 H2 Z" fill="none" stroke="#111" stroke-width="2"/><path d="M19 10 Q22 14 19 18" fill="none" stroke="#111" stroke-width="2"/><path d="M23 6 Q28 14 23 22 M27 2 Q34 14 27 26" fill="none" stroke="#999" stroke-width="2"/></svg>
<svg class="s" style="left:2531px;top:1744px;" width="28" height="34" viewBox="0 0 28 34"><path d="M2 32 L14 2 L26 32 M7 21 H21" fill="none" stroke="#111" stroke-width="2.2"/></svg>
<svg class="s" style="left:2587px;top:1743.5px;" width="32" height="33" viewBox="0 0 32 33"><rect x="0.5" y="0.5" width="31" height="32" fill="#fff" stroke="#777" stroke-width="1"/><circle cx="16" cy="16.5" r="12" fill="#1a1a1a"/><path d="M18 8 V19 Q18 23 14 23 Q11 23 11 20" fill="none" stroke="#fff" stroke-width="2"/></svg>
<div class="t" style="left:2662.51px;top:1730.23px;font-size:25.14px;line-height:25.14px;color:#111;letter-spacing:-1.18px">8:42 PM</div>
<div class="t" style="left:2650.73px;top:1765.93px;font-size:27.14px;line-height:27.14px;color:#111;letter-spacing:-1.39px">9/13/2021</div>
<svg class="s" style="left:2798px;top:1744px;" width="33" height="33" viewBox="0 0 33 33"><path d="M0 0 H32 V22 H14 L8 29 V22 H0 Z" fill="#111"/><path d="M6 6 H26 M6 11 H26 M6 16 H18" stroke="#fff" stroke-width="2"/><circle cx="26" cy="26" r="6" fill="#d2e4ed"/><path d="M29 21 A6 6 0 1 0 31 28 A4.5 4.5 0 0 1 29 21 Z" fill="none" stroke="#111" stroke-width="1.6"/></svg>
<div class="r" style="left:2869px;top:1722px;width:2px;height:78px;background:#b8c4cc"></div>
</body></html>
